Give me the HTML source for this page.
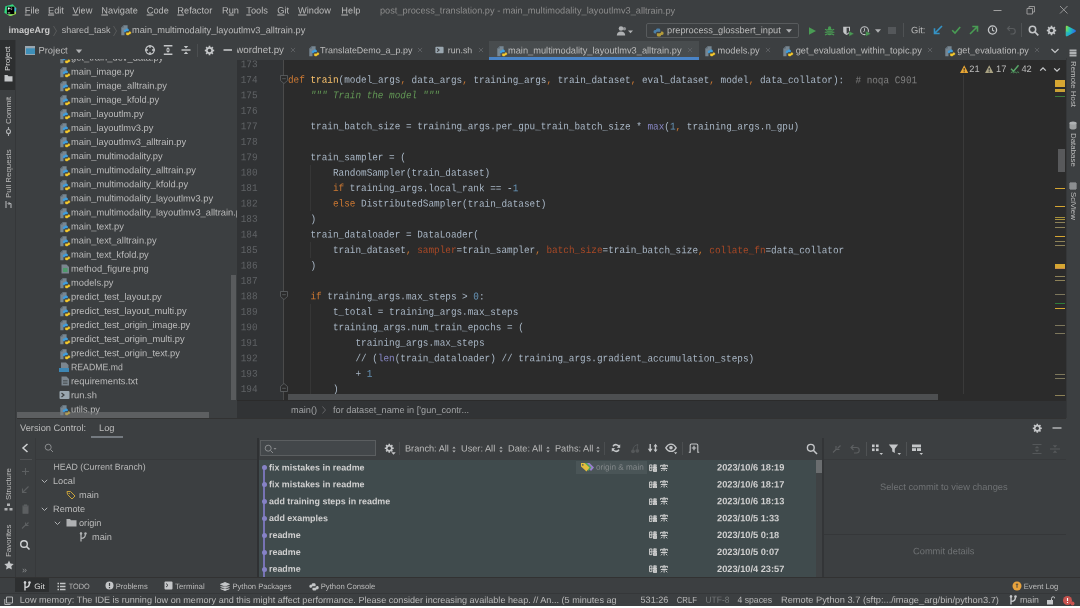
<!DOCTYPE html><html><head><meta charset="utf-8"><title>PyCharm</title><style>
html,body{margin:0;padding:0;background:#3c3f41;overflow:hidden}
body{width:1080px;height:608px;position:relative;font-family:"Liberation Sans",sans-serif}
.b{position:absolute;display:block}
.t{position:absolute;left:0;top:0;white-space:pre;display:block;height:16px;line-height:16px;transform-origin:0 0}
.c{position:absolute;white-space:pre;display:block;font-family:"Liberation Mono",monospace;font-size:9.378px;height:16px;line-height:16px;color:#a9b7c6;left:288.300px;transform:scaleY(1.1);transform-origin:0 11.500px}
.c i{font-style:italic;color:#629755}
.k{color:#cc7832}.f{color:#ffc66d}.n{color:#6897bb}.bi{color:#8888c6}.kw{color:#aa4926}.cm{color:#808080}
.ln{position:absolute;font-family:"Liberation Mono",monospace;font-size:9.35px;color:#606366;left:237px;width:20.500px;transform:scaleY(1.1);transform-origin:0 11.500px;text-align:right;height:16px;line-height:16px}
.v{position:absolute;white-space:pre;font-size:8.600px;color:#bbbbbb;height:12px;line-height:12px;transform-origin:0 0}
u{text-decoration:underline;text-underline-offset:1px;text-decoration-thickness:.7px}

</style></head><body><div class="b" style="left:0;top:0;width:1080px;height:608px;overflow:hidden;will-change:transform">
<div class="b" style="left:0px;top:0px;width:1080px;height:606px;background:#3c3f41;"></div>
<div class="b" style="left:237px;top:59.6px;width:829px;height:340.4px;background:#2b2b2b;"></div>
<div class="b" style="left:237px;top:59.6px;width:47px;height:340.4px;background:#313335;"></div>
<div class="b" style="left:283px;top:59.6px;width:1px;height:340.4px;background:#4b4b4b;"></div>
<div class="b" style="left:963.3px;top:75px;width:1px;height:319px;background:#3a3a3a;"></div>
<div class="b" style="left:237px;top:400px;width:829px;height:18px;background:#313335;"></div>
<div class="b" style="left:237px;top:400px;width:829px;height:1px;background:#2b2b2b;"></div>
<div class="b" style="left:0px;top:606px;width:1080px;height:2px;background:#ffffff;"></div>
<svg class="b" style="left:4.3px;top:3.6px;" width="12.4" height="12.4" viewBox="0 0 12 12"><defs><linearGradient id="pcg" x1="0" y1="0" x2="1" y2="1"><stop offset="0" stop-color="#22d88c"/><stop offset=".5" stop-color="#3fd67a"/><stop offset="1" stop-color="#dcec38"/></linearGradient></defs><path d="M1.300 2.200L8.500.300l3.300 3.500-.3 5.900L6 12 .3 8.500z" fill="url(#pcg)"/><path d="M9.800 3.300l2 .5-.15 3.500H9.800z" fill="#3bb4e6"/><rect x="2.800" y="2.600" width="7.200" height="7.200" fill="#000"/><rect x="3.600" y="8.300" width="2.400" height=".7" fill="#fff"/><path d="M3.700 3.500h1.100c.6 0 .9.300.9.800s-.3.800-.9.800h-.5v.9h-.6z" fill="#fff"/><path d="M7.900 4.100c-.2-.2-.4-.3-.7-.3-.4 0-.7.300-.7.800s.3.800.7.800c.3 0 .5-.1.700-.3" stroke="#fff" stroke-width=".55" fill="none"/></svg>
<span class="t" style="transform:translate(24.80px,2.50px) rotate(0.03deg);font-size:9.25px;color:#bbbbbb;"><u>F</u>ile</span>
<span class="t" style="transform:translate(48.00px,2.50px) rotate(0.03deg);font-size:9.25px;color:#bbbbbb;"><u>E</u>dit</span>
<span class="t" style="transform:translate(72.50px,2.50px) rotate(0.03deg);font-size:9.25px;color:#bbbbbb;"><u>V</u>iew</span>
<span class="t" style="transform:translate(101.30px,2.50px) rotate(0.03deg);font-size:9.25px;color:#bbbbbb;"><u>N</u>avigate</span>
<span class="t" style="transform:translate(146.70px,2.50px) rotate(0.03deg);font-size:9.25px;color:#bbbbbb;"><u>C</u>ode</span>
<span class="t" style="transform:translate(177.30px,2.50px) rotate(0.03deg);font-size:9.25px;color:#bbbbbb;"><u>R</u>efactor</span>
<span class="t" style="transform:translate(222.00px,2.50px) rotate(0.03deg);font-size:9.25px;color:#bbbbbb;">R<u>u</u>n</span>
<span class="t" style="transform:translate(246.30px,2.50px) rotate(0.03deg);font-size:9.25px;color:#bbbbbb;"><u>T</u>ools</span>
<span class="t" style="transform:translate(277.30px,2.50px) rotate(0.03deg);font-size:9.25px;color:#bbbbbb;"><u>G</u>it</span>
<span class="t" style="transform:translate(298.00px,2.50px) rotate(0.03deg);font-size:9.25px;color:#bbbbbb;"><u>W</u>indow</span>
<span class="t" style="transform:translate(341.30px,2.50px) rotate(0.03deg);font-size:9.25px;color:#bbbbbb;"><u>H</u>elp</span>
<span class="t" style="transform:translate(380.00px,2.49px) rotate(0.03deg);font-size:9.214px;color:#8c8c8c;">post_process_translation.py - main_multimodality_layoutlmv3_alltrain.py</span>
<svg class="b" style="left:992px;top:4px;" width="12" height="12" viewBox="0 0 12 12"><path d="M1.500 6.500h8" stroke="#a0a0a0" stroke-width="1"/></svg>
<svg class="b" style="left:1025px;top:4px;" width="12" height="12" viewBox="0 0 12 12"><path d="M2 4.500h5.500v5.500H2zM4 4.500V2.500h5.500V8H7.500" stroke="#a0a0a0" stroke-width=".9" fill="none"/></svg>
<svg class="b" style="left:1058px;top:4px;" width="12" height="12" viewBox="0 0 12 12"><path d="M2 2l7.500 7.500M9.500 2L2 9.500" stroke="#a0a0a0" stroke-width=".9" fill="none"/></svg>
<span class="t" style="transform:translate(8.50px,22.04px) rotate(0.03deg);font-size:9.0px;color:#c8c8c8;font-weight:bold;">imageArg</span>
<svg class="b" style="left:52px;top:24.5px;" width="6" height="12" viewBox="0 0 6 12"><path d="M1.500 1l3 5-3 5" stroke="#5e6060" stroke-width=".8" fill="none"/></svg>
<span class="t" style="transform:translate(61.70px,22.02px) rotate(0.03deg);font-size:8.95px;color:#bbbbbb;">shared_task</span>
<svg class="b" style="left:111.5px;top:24.5px;" width="6" height="12" viewBox="0 0 6 12"><path d="M1.500 1l3 5-3 5" stroke="#5e6060" stroke-width=".8" fill="none"/></svg>
<svg class="b" style="left:120.5px;top:25px;" width="11" height="11" viewBox="0 0 11 11"><path d="M2.600.300H6.600V6H3.500v4.200H.300V2.600z" fill="#8193a0" opacity=".85"/><path d="M.300 2.600L2.600.300v2.300z" fill="#56636d"/><g transform="translate(1.900 1.300) scale(.82)"><path d="M3.400 4.300c0-.9.600-1.300 1.800-1.300s1.800.400 1.800 1.300v1.400H4.700c-.9 0-1.300.500-1.300 1.400H2.600c-.9 0-1.300-.600-1.300-1.400s.400-1.400 1.300-1.400z" fill="#3f9fe0" stroke="#3f9fe0" stroke-width=".5"/><path d="M7.700 9.400c0 .9-.600 1.300-1.800 1.300S4.100 10.300 4.100 9.400V8h2.300c.9 0 1.300-.500 1.300-1.400h.8c.9 0 1.300.600 1.300 1.400s-.400 1.400-1.300 1.400z" fill="#f5c92c" stroke="#f5c92c" stroke-width=".5"/></g></svg>
<span class="t" style="transform:translate(132.00px,22.10px) rotate(0.03deg);font-size:9.263px;color:#bbbbbb;">main_multimodality_layoutlmv3_alltrain.py</span>
<svg class="b" style="left:616px;top:24.5px;" width="18" height="12" viewBox="0 0 18 12"><circle cx="5" cy="3.500" r="2.300" fill="#afb1b3"/><path d="M.8 10.500c0-2.700 1.800-4 4.200-4s4.200 1.300 4.200 4z" fill="#afb1b3"/><circle cx="8.300" cy="3.800" r="1.800" fill="#afb1b3" opacity=".7"/><path d="M12 5.500h5l-2.500 2.800z" fill="#afb1b3"/></svg>
<div class="b" style="left:646.3px;top:23px;width:152.5px;height:14.6px;background:transparent;border:1px solid #585b5d;box-sizing:border-box;border-radius:2px"></div>
<svg class="b" style="left:652px;top:24.5px;" width="13" height="13" viewBox="0 0 11 11"><path d="M3.400 4.300c0-.9.600-1.300 1.800-1.300s1.800.400 1.800 1.300v1.400H4.700c-.9 0-1.300.500-1.300 1.400H2.600c-.9 0-1.300-.600-1.300-1.400s.400-1.400 1.300-1.400z" fill="#4b7fa8"/><path d="M7.700 8.400c0 .9-.600 1.300-1.800 1.300S4.100 9.300 4.100 8.400V7h2.300c.9 0 1.300-.500 1.300-1.400h.800c.9 0 1.300.600 1.300 1.400s-.400 1.400-1.300 1.400z" fill="#b39b3b"/></svg>
<span class="t" style="transform:translate(667.00px,22.31px) rotate(0.03deg);font-size:9.279px;color:#bbbbbb;">preprocess_glossbert_input</span>
<svg class="b" style="left:785px;top:27.5px;" width="8" height="6" viewBox="0 0 8 6"><path d="M1 1.200h6L4 4.800z" fill="#afb1b3"/></svg>
<svg class="b" style="left:806px;top:24.5px;" width="12" height="12" viewBox="0 0 12 12"><path d="M3 2.200l7 3.800-7 3.800z" fill="#499c54"/></svg>
<svg class="b" style="left:823px;top:24.5px;" width="13" height="12" viewBox="0 0 13 12"><ellipse cx="6.600" cy="6.800" rx="2.900" ry="3.500" fill="#499c54"/><circle cx="6.600" cy="2.900" r="1.600" fill="#499c54"/><path d="M2 4.300l2.200 1M11.200 4.300L9 5.300M1.800 7.200h2.500M11.400 7.200H9M2 10l2.200-1M11.200 10L9 9" stroke="#499c54" stroke-width="1.100"/><path d="M4 5.800h5.200M4 8h5.200" stroke="#3c3f41" stroke-width=".7"/></svg>
<svg class="b" style="left:842px;top:24.5px;" width="14" height="12" viewBox="0 0 14 12"><path d="M1.200 1.800h6.800v4.500c0 1.800-1.500 3-3.400 3.700-1.900-.7-3.400-1.900-3.400-3.700z" fill="#c4c6c8"/><path d="M4.600 2.800h2.400v3.400c0 1-.8 1.800-2.400 2.500z" fill="#3c3f41"/><path d="M7 6l5.200 2.700L7 11.400z" fill="#499c54" stroke="#3c3f41" stroke-width=".5"/></svg>
<svg class="b" style="left:859px;top:24.5px;" width="14" height="12" viewBox="0 0 14 12"><circle cx="5.500" cy="5.700" r="3.900" stroke="#c4c6c8" stroke-width="1.100" fill="none"/><path d="M5.500 3.300v2.600l-1.200 1.200" stroke="#c4c6c8" stroke-width=".9" fill="none"/><path d="M6.700 6l5.200 2.700-5.200 2.700z" fill="#499c54" stroke="#3c3f41" stroke-width=".5"/></svg>
<svg class="b" style="left:874px;top:27.5px;" width="8" height="6" viewBox="0 0 8 6"><path d="M1 1.200h6L4 4.800z" fill="#afb1b3"/></svg>
<div class="b" style="left:888.4px;top:27px;width:7.4px;height:7.2px;background:#54575a;"></div>
<div class="b" style="left:903px;top:23px;width:1px;height:14px;background:#4f5254;"></div>
<span class="t" style="transform:translate(911.00px,22.21px) rotate(0.03deg);font-size:9.3px;color:#bbbbbb;">Git:</span>
<svg class="b" style="left:931.7px;top:23.8px;" width="12" height="12" viewBox="0 0 12 12"><path d="M10 2L2.500 9.500M2.500 4.300v5.200h5.200" stroke="#3592c4" stroke-width="1.600" fill="none"/></svg>
<svg class="b" style="left:950px;top:24px;" width="13" height="12" viewBox="0 0 13 12"><path d="M2.200 6.200l2.800 2.800 5.200-6" stroke="#499c54" stroke-width="1.600" fill="none"/></svg>
<svg class="b" style="left:968px;top:24px;" width="12" height="12" viewBox="0 0 12 12"><path d="M2 10L9.500 2.500M4.300 2.500h5.200v5.200" stroke="#499c54" stroke-width="1.600" fill="none"/></svg>
<svg class="b" style="left:985.7px;top:24.4px;" width="13" height="12" viewBox="0 0 13 12"><circle cx="6.500" cy="6" r="4.100" stroke="#c4c6c8" stroke-width="1.300" fill="none"/><path d="M6.500 3.600v2.700l1.800 1" stroke="#c4c6c8" stroke-width="1.100" fill="none"/></svg>
<svg class="b" style="left:1004.5px;top:23.8px;" width="12" height="12" viewBox="0 0 12 12"><path d="M2.500 4.500h5a2.700 2.700 0 010 5.500H5.500M4.800 2.200L2.500 4.500 4.800 6.800" stroke="#595c5e" stroke-width="1.200" fill="none"/></svg>
<div class="b" style="left:1021px;top:23px;width:1px;height:14px;background:#4f5254;"></div>
<svg class="b" style="left:1028px;top:24.5px;" width="12" height="12" viewBox="0 0 12 12"><circle cx="4.500" cy="4.500" r="3.200" stroke="#c4c6c8" stroke-width="1.500" fill="none"/><path d="M7 7L10.300 10.300" stroke="#c4c6c8" stroke-width="1.700"/></svg>
<svg class="b" style="left:1045.5px;top:25px;" width="11" height="11" viewBox="0 0 12 12"><path d="M9.78 5.04L11.12 5.11L11.12 6.89L9.78 6.96L9.35 8.00L10.25 8.99L8.99 10.25L8.00 9.35L6.96 9.78L6.89 11.12L5.11 11.12L5.04 9.78L4.00 9.35L3.01 10.25L1.75 8.99L2.65 8.00L2.22 6.96L0.88 6.89L0.88 5.11L2.22 5.04L2.65 4.00L1.75 3.01L3.01 1.75L4.00 2.65L5.04 2.22L5.11 0.88L6.89 0.88L6.96 2.22L8.00 2.65L8.99 1.75L10.25 3.01L9.35 4.00z" fill="#c4c6c8"/><circle cx="6" cy="6" r="1.900" fill="#3c3f41"/></svg>
<svg class="b" style="left:1064.5px;top:24.5px;" width="12" height="12" viewBox="0 0 12 12"><defs><linearGradient id="tbg" x1="0" y1="0" x2="1" y2=".3"><stop offset="0" stop-color="#9be03c"/><stop offset=".45" stop-color="#1fc8b8"/><stop offset="1" stop-color="#2a6fe8"/></linearGradient></defs><path d="M.8 1.800C.8.900 1.700.500 2.500 1L10.300 5.100c.8.400.8 1.400 0 1.800L2.500 11c-.8.500-1.700.100-1.700-.8z" fill="url(#tbg)"/><path d="M.8 6v4.200c0 .9.900 1.300 1.700.8L6 9z" fill="#1e9fd8" opacity=".6"/></svg>
<svg class="b" style="left:24.8px;top:46.1px;" width="10.6" height="9" viewBox="0 0 10.6 9"><rect x=".5" y=".5" width="10" height="8" fill="#3e8fb8" stroke="#9aa7b0" stroke-width="1"/><rect x=".5" y=".5" width="10" height="1.800" fill="#9aa7b0"/></svg>
<span class="t" style="transform:translate(38.50px,42.54px) rotate(0.03deg);font-size:9.4px;color:#bbbbbb;">Project</span>
<svg class="b" style="left:75.2px;top:48.7px;" width="8" height="5" viewBox="0 0 8 5"><path d="M.8.600h6.400L4 4.200z" fill="#afb1b3"/></svg>
<svg class="b" style="left:143.9px;top:44px;" width="12" height="12" viewBox="0 0 12 12"><circle cx="6" cy="6" r="4.200" stroke="#c4c6c8" stroke-width="1.300" fill="none"/><path d="M6 1v3M6 8v3M1 6H4M8 6h3" stroke="#c4c6c8" stroke-width="1.300"/></svg>
<svg class="b" style="left:162px;top:44px;" width="12" height="12" viewBox="0 0 12 12"><path d="M1.800 1.800h8.600M1.800 10.200h8.600" stroke="#c4c6c8" stroke-width="1.400"/><path d="M6 3.200l2.200 2.300H3.800zM6 8.800L3.800 6.500h4.400z" fill="#c4c6c8"/></svg>
<svg class="b" style="left:180.4px;top:44.2px;" width="12" height="12" viewBox="0 0 12 12"><path d="M1.500 6h9" stroke="#c4c6c8" stroke-width="1.400"/><path d="M6 4.500L3.800 2h4.400zM6 7.500l2.200 2.500H3.800z" fill="#c4c6c8"/></svg>
<div class="b" style="left:197px;top:43.5px;width:1px;height:13px;background:#4b4e50;"></div>
<svg class="b" style="left:204.3px;top:44.8px;" width="11" height="11" viewBox="0 0 12 12"><path d="M9.78 5.04L11.12 5.11L11.12 6.89L9.78 6.96L9.35 8.00L10.25 8.99L8.99 10.25L8.00 9.35L6.96 9.78L6.89 11.12L5.11 11.12L5.04 9.78L4.00 9.35L3.01 10.25L1.75 8.99L2.65 8.00L2.22 6.96L0.88 6.89L0.88 5.11L2.22 5.04L2.65 4.00L1.75 3.01L3.01 1.75L4.00 2.65L5.04 2.22L5.11 0.88L6.89 0.88L6.96 2.22L8.00 2.65L8.99 1.75L10.25 3.01L9.35 4.00z" fill="#c4c6c8"/><circle cx="6" cy="6" r="1.900" fill="#3c3f41"/></svg>
<svg class="b" style="left:222px;top:44px;" width="12" height="12" viewBox="0 0 12 12"><path d="M1.500 6h8.500" stroke="#c4c6c8" stroke-width="1.600"/></svg>
<div class="b" style="left:237px;top:40px;width:829px;height:19.6px;background:#3c3f41;"></div>
<div class="b" style="left:488.5px;top:41px;width:210px;height:18.6px;background:#484c4e;"></div>
<div class="b" style="left:488.5px;top:56.8px;width:210px;height:2.8px;background:#4a84c7;"></div>
<div class="b" style="left:237px;top:40px;width:829px;height:19.600px;overflow:hidden">
<span class="t" style="transform:translate(-0.80px,2.04px) rotate(0.03deg);font-size:9.772px;color:#bbbbbb;">wordnet.py</span>
<svg class="b" style="left:52.5px;top:7.300000000000001px;" width="6" height="6" viewBox="0 0 6 6"><path d="M.9.9l4.200 4.200M5.100.9L.9 5.100" stroke="#5f6265" stroke-width="0.9" fill="none"/></svg>
<svg class="b" style="left:71.5px;top:5.5px;" width="11" height="11" viewBox="0 0 11 11"><path d="M2.600.300H6.600V6H3.500v4.200H.300V2.600z" fill="#8193a0" opacity=".85"/><path d="M.300 2.600L2.600.300v2.300z" fill="#56636d"/><g transform="translate(1.900 1.300) scale(.82)"><path d="M3.400 4.300c0-.9.600-1.300 1.800-1.300s1.800.400 1.800 1.300v1.400H4.700c-.9 0-1.300.500-1.300 1.400H2.600c-.9 0-1.300-.600-1.300-1.400s.400-1.400 1.300-1.400z" fill="#3f9fe0" stroke="#3f9fe0" stroke-width=".5"/><path d="M7.700 9.400c0 .9-.600 1.300-1.800 1.300S4.100 10.300 4.100 9.400V8h2.300c.9 0 1.300-.500 1.300-1.400h.8c.9 0 1.300.600 1.300 1.400s-.400 1.400-1.300 1.400z" fill="#f5c92c" stroke="#f5c92c" stroke-width=".5"/></g></svg>
<span class="t" style="transform:translate(83.00px,2.32px) rotate(0.03deg);font-size:8.931px;color:#bbbbbb;">TranslateDemo_a_p.py</span>
<svg class="b" style="left:180px;top:7.300000000000001px;" width="6" height="6" viewBox="0 0 6 6"><path d="M.9.9l4.200 4.200M5.100.9L.9 5.100" stroke="#5f6265" stroke-width="0.9" fill="none"/></svg>
<svg class="b" style="left:198px;top:5.8px;" width="9" height="8.2" viewBox="0 0 11 10"><rect x=".5" y="1" width="10" height="8" rx="1" fill="#9aa7b0"/><path d="M2.500 3l2.500 2-2.500 2" stroke="#3c3f41" stroke-width="1.300" fill="none"/></svg>
<span class="t" style="transform:translate(210.80px,2.29px) rotate(0.03deg);font-size:8.815px;color:#bbbbbb;">run.sh</span>
<svg class="b" style="left:241px;top:7.300000000000001px;" width="6" height="6" viewBox="0 0 6 6"><path d="M.9.9l4.200 4.200M5.100.9L.9 5.100" stroke="#5f6265" stroke-width="0.9" fill="none"/></svg>
<svg class="b" style="left:259.5px;top:5.5px;" width="11" height="11" viewBox="0 0 11 11"><path d="M2.600.300H6.600V6H3.500v4.200H.300V2.600z" fill="#8193a0" opacity=".85"/><path d="M.300 2.600L2.600.300v2.300z" fill="#56636d"/><g transform="translate(1.900 1.300) scale(.82)"><path d="M3.400 4.300c0-.9.600-1.300 1.800-1.300s1.800.400 1.800 1.300v1.400H4.700c-.9 0-1.300.500-1.300 1.400H2.600c-.9 0-1.300-.600-1.300-1.400s.400-1.400 1.300-1.400z" fill="#3f9fe0" stroke="#3f9fe0" stroke-width=".5"/><path d="M7.700 9.400c0 .9-.600 1.300-1.800 1.300S4.100 10.300 4.100 9.400V8h2.300c.9 0 1.300-.500 1.300-1.400h.8c.9 0 1.300.600 1.300 1.400s-.400 1.400-1.300 1.400z" fill="#f5c92c" stroke="#f5c92c" stroke-width=".5"/></g></svg>
<span class="t" style="transform:translate(271.00px,2.41px) rotate(0.03deg);font-size:9.289px;color:#bbbbbb;">main_multimodality_layoutlmv3_alltrain.py</span>
<svg class="b" style="left:450px;top:7.300000000000001px;" width="6" height="6" viewBox="0 0 6 6"><path d="M.9.9l4.200 4.200M5.100.9L.9 5.100" stroke="#5f6265" stroke-width="0.9" fill="none"/></svg>
<svg class="b" style="left:468px;top:5.5px;" width="11" height="11" viewBox="0 0 11 11"><path d="M2.600.300H6.600V6H3.500v4.200H.300V2.600z" fill="#8193a0" opacity=".85"/><path d="M.300 2.600L2.600.300v2.300z" fill="#56636d"/><g transform="translate(1.900 1.300) scale(.82)"><path d="M3.400 4.300c0-.9.600-1.300 1.800-1.300s1.800.400 1.800 1.300v1.400H4.700c-.9 0-1.300.500-1.300 1.400H2.600c-.9 0-1.300-.600-1.300-1.400s.400-1.400 1.300-1.400z" fill="#3f9fe0" stroke="#3f9fe0" stroke-width=".5"/><path d="M7.700 9.400c0 .9-.600 1.300-1.800 1.300S4.100 10.300 4.100 9.400V8h2.300c.9 0 1.300-.500 1.300-1.400h.8c.9 0 1.300.600 1.300 1.400s-.400 1.400-1.300 1.400z" fill="#f5c92c" stroke="#f5c92c" stroke-width=".5"/></g></svg>
<span class="t" style="transform:translate(480.50px,2.41px) rotate(0.03deg);font-size:9.281px;color:#bbbbbb;">models.py</span>
<svg class="b" style="left:528px;top:7.300000000000001px;" width="6" height="6" viewBox="0 0 6 6"><path d="M.9.9l4.200 4.200M5.100.9L.9 5.100" stroke="#5f6265" stroke-width="0.9" fill="none"/></svg>
<svg class="b" style="left:546px;top:5.5px;" width="11" height="11" viewBox="0 0 11 11"><path d="M2.600.300H6.600V6H3.500v4.200H.300V2.600z" fill="#8193a0" opacity=".85"/><path d="M.300 2.600L2.600.300v2.300z" fill="#56636d"/><g transform="translate(1.900 1.300) scale(.82)"><path d="M3.400 4.300c0-.9.600-1.300 1.800-1.300s1.800.400 1.800 1.300v1.400H4.700c-.9 0-1.300.500-1.300 1.400H2.600c-.9 0-1.300-.600-1.300-1.400s.400-1.400 1.300-1.400z" fill="#3f9fe0" stroke="#3f9fe0" stroke-width=".5"/><path d="M7.700 9.400c0 .9-.600 1.300-1.800 1.300S4.100 10.300 4.100 9.400V8h2.300c.9 0 1.300-.500 1.300-1.400h.8c.9 0 1.300.600 1.300 1.400s-.400 1.400-1.300 1.400z" fill="#f5c92c" stroke="#f5c92c" stroke-width=".5"/></g></svg>
<span class="t" style="transform:translate(558.70px,2.41px) rotate(0.03deg);font-size:9.272px;color:#bbbbbb;">get_evaluation_within_topic.py</span>
<svg class="b" style="left:690px;top:7.300000000000001px;" width="6" height="6" viewBox="0 0 6 6"><path d="M.9.9l4.200 4.200M5.100.9L.9 5.100" stroke="#5f6265" stroke-width="0.9" fill="none"/></svg>
<svg class="b" style="left:708px;top:5.5px;" width="11" height="11" viewBox="0 0 11 11"><path d="M2.600.300H6.600V6H3.500v4.200H.300V2.600z" fill="#8193a0" opacity=".85"/><path d="M.300 2.600L2.600.300v2.300z" fill="#56636d"/><g transform="translate(1.900 1.300) scale(.82)"><path d="M3.400 4.300c0-.9.600-1.300 1.800-1.300s1.800.400 1.800 1.300v1.400H4.700c-.9 0-1.300.500-1.300 1.400H2.600c-.9 0-1.300-.600-1.300-1.400s.400-1.400 1.300-1.400z" fill="#3f9fe0" stroke="#3f9fe0" stroke-width=".5"/><path d="M7.700 9.400c0 .9-.600 1.300-1.800 1.300S4.100 10.300 4.100 9.400V8h2.300c.9 0 1.300-.500 1.300-1.400h.8c.9 0 1.300.600 1.300 1.400s-.400 1.400-1.300 1.400z" fill="#f5c92c" stroke="#f5c92c" stroke-width=".5"/></g></svg>
<span class="t" style="transform:translate(720.30px,2.37px) rotate(0.03deg);font-size:9.146px;color:#bbbbbb;">get_evaluation.py</span>
<svg class="b" style="left:797px;top:7.300000000000001px;" width="6" height="6" viewBox="0 0 6 6"><path d="M.9.9l4.200 4.200M5.100.9L.9 5.100" stroke="#5f6265" stroke-width="0.9" fill="none"/></svg>
<svg class="b" style="left:813px;top:7px;" width="10" height="8" viewBox="0 0 10 8"><path d="M1.500 2l3.500 3.500L8.500 2" stroke="#c4c6c8" stroke-width="1.200" fill="none"/></svg>
</div>
<div class="b" style="left:0px;top:40px;width:15px;height:537px;background:#3c3f41;"></div>
<div class="b" style="left:15px;top:40px;width:1px;height:537px;background:#353739;"></div>
<div class="b" style="left:0px;top:40px;width:15px;height:49.5px;background:#2d2f30;"></div>
<span class="v" style="left:2px;top:70.5px;transform:rotate(-90deg);font-size:7.9px;color:#dcdcdc;">Project</span>
<svg class="b" style="left:4px;top:73.5px;" width="9" height="8" viewBox="0 0 9 8"><path d="M.5 1h3l1 1.200h4V7.500h-8z" fill="#c4c6c8"/></svg>
<span class="v" style="left:2.5px;top:124px;transform:rotate(-90deg);font-size:7.9px;color:#bbbbbb;">Commit</span>
<svg class="b" style="left:4px;top:126.5px;" width="9" height="9" viewBox="0 0 9 9"><circle cx="4.500" cy="4.500" r="2" stroke="#afb1b3" stroke-width="1.100" fill="none"/><path d="M4.500 0v2.500M4.500 6.500V9" stroke="#afb1b3" stroke-width="1.100"/></svg>
<span class="v" style="left:2.5px;top:198px;transform:rotate(-90deg);font-size:7.9px;color:#bbbbbb;">Pull Requests</span>
<svg class="b" style="left:4px;top:200px;" width="9" height="9" viewBox="0 0 9 9"><path d="M2 1v7M7 3.500V8M4.500 3.500H7" stroke="#afb1b3" stroke-width="1.100" fill="none"/><path d="M5.500 2L4 3.500 5.500 5" stroke="#afb1b3" stroke-width="1" fill="none"/></svg>
<span class="v" style="left:2.5px;top:499.5px;transform:rotate(-90deg);font-size:7.9px;color:#bbbbbb;">Structure</span>
<svg class="b" style="left:4px;top:503px;" width="9" height="8" viewBox="0 0 9 8"><rect x="3" y=".5" width="3" height="2.500" fill="#afb1b3"/><rect x=".5" y="5" width="3" height="2.500" fill="#afb1b3"/><rect x="5.500" y="5" width="3" height="2.500" fill="#afb1b3"/></svg>
<span class="v" style="left:2.5px;top:556.5px;transform:rotate(-90deg);font-size:7.9px;color:#bbbbbb;">Favorites</span>
<svg class="b" style="left:3.5px;top:559.5px;" width="10" height="10" viewBox="0 0 10 10"><path d="M5 .5l1.400 3 3.300.4-2.400 2.300.6 3.300L5 7.900 2.100 9.500l.6-3.300L.3 3.900l3.300-.4z" fill="#c4c6c8"/></svg>
<div class="b" style="left:17px;top:59px;width:220px;height:359px;overflow:hidden">
<svg class="b" style="left:43.2px;top:-6.0200000000000005px;" width="11" height="11" viewBox="0 0 11 11"><path d="M2.600.300H6.600V6H3.500v4.200H.300V2.600z" fill="#8193a0" opacity=".85"/><path d="M.300 2.600L2.600.300v2.300z" fill="#56636d"/><g transform="translate(1.900 1.300) scale(.82)"><path d="M3.400 4.300c0-.9.600-1.300 1.800-1.300s1.800.400 1.800 1.300v1.400H4.700c-.9 0-1.300.500-1.300 1.400H2.600c-.9 0-1.300-.600-1.300-1.400s.400-1.400 1.300-1.400z" fill="#3f9fe0" stroke="#3f9fe0" stroke-width=".5"/><path d="M7.700 9.400c0 .9-.600 1.300-1.800 1.300S4.100 10.300 4.100 9.400V8h2.300c.9 0 1.300-.500 1.300-1.400h.8c.9 0 1.300.600 1.300 1.400s-.400 1.400-1.300 1.400z" fill="#f5c92c" stroke="#f5c92c" stroke-width=".5"/></g></svg>
<span class="t" style="transform:translate(54.00px,-9.40px) rotate(0.03deg);font-size:9.33px;color:#bbbbbb;">get_train_dev_data.py</span>
<svg class="b" style="left:43.2px;top:8.053px;" width="11" height="11" viewBox="0 0 11 11"><path d="M2.600.300H6.600V6H3.500v4.200H.300V2.600z" fill="#8193a0" opacity=".85"/><path d="M.300 2.600L2.600.300v2.300z" fill="#56636d"/><g transform="translate(1.900 1.300) scale(.82)"><path d="M3.400 4.300c0-.9.600-1.300 1.800-1.300s1.800.400 1.800 1.300v1.400H4.700c-.9 0-1.300.500-1.300 1.400H2.600c-.9 0-1.300-.600-1.300-1.400s.400-1.400 1.300-1.400z" fill="#3f9fe0" stroke="#3f9fe0" stroke-width=".5"/><path d="M7.700 9.400c0 .9-.600 1.300-1.800 1.300S4.100 10.300 4.100 9.400V8h2.300c.9 0 1.300-.500 1.300-1.400h.8c.9 0 1.300.600 1.300 1.400s-.400 1.400-1.300 1.400z" fill="#f5c92c" stroke="#f5c92c" stroke-width=".5"/></g></svg>
<span class="t" style="transform:translate(54.00px,4.67px) rotate(0.03deg);font-size:9.33px;color:#bbbbbb;">main_image.py</span>
<svg class="b" style="left:43.2px;top:22.125999999999994px;" width="11" height="11" viewBox="0 0 11 11"><path d="M2.600.300H6.600V6H3.500v4.200H.300V2.600z" fill="#8193a0" opacity=".85"/><path d="M.300 2.600L2.600.300v2.300z" fill="#56636d"/><g transform="translate(1.900 1.300) scale(.82)"><path d="M3.400 4.300c0-.9.600-1.300 1.800-1.300s1.800.400 1.800 1.300v1.400H4.700c-.9 0-1.300.500-1.300 1.400H2.600c-.9 0-1.300-.600-1.300-1.400s.400-1.400 1.300-1.400z" fill="#3f9fe0" stroke="#3f9fe0" stroke-width=".5"/><path d="M7.700 9.400c0 .9-.600 1.300-1.800 1.300S4.100 10.300 4.100 9.400V8h2.300c.9 0 1.300-.500 1.300-1.400h.8c.9 0 1.300.600 1.300 1.400s-.400 1.400-1.300 1.400z" fill="#f5c92c" stroke="#f5c92c" stroke-width=".5"/></g></svg>
<span class="t" style="transform:translate(54.00px,18.75px) rotate(0.03deg);font-size:9.33px;color:#bbbbbb;">main_image_alltrain.py</span>
<svg class="b" style="left:43.2px;top:36.199px;" width="11" height="11" viewBox="0 0 11 11"><path d="M2.600.300H6.600V6H3.500v4.200H.300V2.600z" fill="#8193a0" opacity=".85"/><path d="M.300 2.600L2.600.300v2.300z" fill="#56636d"/><g transform="translate(1.900 1.300) scale(.82)"><path d="M3.400 4.300c0-.9.600-1.300 1.800-1.300s1.800.400 1.800 1.300v1.400H4.700c-.9 0-1.300.500-1.300 1.400H2.600c-.9 0-1.300-.600-1.300-1.400s.400-1.400 1.300-1.400z" fill="#3f9fe0" stroke="#3f9fe0" stroke-width=".5"/><path d="M7.700 9.400c0 .9-.600 1.300-1.800 1.300S4.100 10.300 4.100 9.400V8h2.300c.9 0 1.300-.500 1.300-1.400h.8c.9 0 1.300.600 1.300 1.400s-.400 1.400-1.300 1.400z" fill="#f5c92c" stroke="#f5c92c" stroke-width=".5"/></g></svg>
<span class="t" style="transform:translate(54.00px,32.82px) rotate(0.03deg);font-size:9.33px;color:#bbbbbb;">main_image_kfold.py</span>
<svg class="b" style="left:43.2px;top:50.272000000000006px;" width="11" height="11" viewBox="0 0 11 11"><path d="M2.600.300H6.600V6H3.500v4.200H.300V2.600z" fill="#8193a0" opacity=".85"/><path d="M.300 2.600L2.600.300v2.300z" fill="#56636d"/><g transform="translate(1.900 1.300) scale(.82)"><path d="M3.400 4.300c0-.9.600-1.300 1.800-1.300s1.800.400 1.800 1.300v1.400H4.700c-.9 0-1.300.500-1.300 1.400H2.600c-.9 0-1.300-.600-1.300-1.400s.400-1.400 1.300-1.400z" fill="#3f9fe0" stroke="#3f9fe0" stroke-width=".5"/><path d="M7.700 9.400c0 .9-.600 1.300-1.800 1.300S4.100 10.300 4.100 9.400V8h2.300c.9 0 1.300-.500 1.300-1.400h.8c.9 0 1.300.600 1.300 1.400s-.400 1.400-1.300 1.400z" fill="#f5c92c" stroke="#f5c92c" stroke-width=".5"/></g></svg>
<span class="t" style="transform:translate(54.00px,46.89px) rotate(0.03deg);font-size:9.33px;color:#bbbbbb;">main_layoutlm.py</span>
<svg class="b" style="left:43.2px;top:64.34500000000001px;" width="11" height="11" viewBox="0 0 11 11"><path d="M2.600.300H6.600V6H3.500v4.200H.300V2.600z" fill="#8193a0" opacity=".85"/><path d="M.300 2.600L2.600.300v2.300z" fill="#56636d"/><g transform="translate(1.900 1.300) scale(.82)"><path d="M3.400 4.300c0-.9.600-1.300 1.800-1.300s1.800.400 1.800 1.300v1.400H4.700c-.9 0-1.300.500-1.300 1.400H2.600c-.9 0-1.300-.600-1.300-1.400s.400-1.400 1.300-1.400z" fill="#3f9fe0" stroke="#3f9fe0" stroke-width=".5"/><path d="M7.700 9.400c0 .9-.600 1.300-1.800 1.300S4.100 10.300 4.100 9.400V8h2.300c.9 0 1.300-.500 1.300-1.400h.8c.9 0 1.300.600 1.300 1.400s-.400 1.400-1.300 1.400z" fill="#f5c92c" stroke="#f5c92c" stroke-width=".5"/></g></svg>
<span class="t" style="transform:translate(54.00px,60.97px) rotate(0.03deg);font-size:9.33px;color:#bbbbbb;">main_layoutlmv3.py</span>
<svg class="b" style="left:43.2px;top:78.41799999999999px;" width="11" height="11" viewBox="0 0 11 11"><path d="M2.600.300H6.600V6H3.500v4.200H.300V2.600z" fill="#8193a0" opacity=".85"/><path d="M.300 2.600L2.600.300v2.300z" fill="#56636d"/><g transform="translate(1.900 1.300) scale(.82)"><path d="M3.400 4.300c0-.9.600-1.300 1.800-1.300s1.800.400 1.800 1.300v1.400H4.700c-.9 0-1.300.500-1.300 1.400H2.600c-.9 0-1.300-.600-1.300-1.400s.400-1.400 1.300-1.400z" fill="#3f9fe0" stroke="#3f9fe0" stroke-width=".5"/><path d="M7.700 9.400c0 .9-.600 1.300-1.800 1.300S4.100 10.300 4.100 9.400V8h2.300c.9 0 1.300-.500 1.300-1.400h.8c.9 0 1.300.600 1.300 1.400s-.400 1.400-1.300 1.400z" fill="#f5c92c" stroke="#f5c92c" stroke-width=".5"/></g></svg>
<span class="t" style="transform:translate(54.00px,75.04px) rotate(0.03deg);font-size:9.33px;color:#bbbbbb;">main_layoutlmv3_alltrain.py</span>
<svg class="b" style="left:43.2px;top:92.491px;" width="11" height="11" viewBox="0 0 11 11"><path d="M2.600.300H6.600V6H3.500v4.200H.300V2.600z" fill="#8193a0" opacity=".85"/><path d="M.300 2.600L2.600.300v2.300z" fill="#56636d"/><g transform="translate(1.900 1.300) scale(.82)"><path d="M3.400 4.300c0-.9.600-1.300 1.800-1.300s1.800.400 1.800 1.300v1.400H4.700c-.9 0-1.300.500-1.300 1.400H2.600c-.9 0-1.300-.600-1.300-1.400s.400-1.400 1.300-1.400z" fill="#3f9fe0" stroke="#3f9fe0" stroke-width=".5"/><path d="M7.700 9.400c0 .9-.600 1.300-1.800 1.300S4.100 10.300 4.100 9.400V8h2.300c.9 0 1.300-.500 1.300-1.400h.8c.9 0 1.300.600 1.300 1.400s-.400 1.400-1.300 1.400z" fill="#f5c92c" stroke="#f5c92c" stroke-width=".5"/></g></svg>
<span class="t" style="transform:translate(54.00px,89.11px) rotate(0.03deg);font-size:9.33px;color:#bbbbbb;">main_multimodality.py</span>
<svg class="b" style="left:43.2px;top:106.56400000000001px;" width="11" height="11" viewBox="0 0 11 11"><path d="M2.600.300H6.600V6H3.500v4.200H.300V2.600z" fill="#8193a0" opacity=".85"/><path d="M.300 2.600L2.600.300v2.300z" fill="#56636d"/><g transform="translate(1.900 1.300) scale(.82)"><path d="M3.400 4.300c0-.9.600-1.300 1.800-1.300s1.800.400 1.800 1.300v1.400H4.700c-.9 0-1.300.500-1.300 1.400H2.600c-.9 0-1.300-.600-1.300-1.400s.400-1.400 1.300-1.400z" fill="#3f9fe0" stroke="#3f9fe0" stroke-width=".5"/><path d="M7.700 9.400c0 .9-.600 1.300-1.800 1.300S4.100 10.300 4.100 9.400V8h2.300c.9 0 1.300-.500 1.300-1.400h.8c.9 0 1.300.600 1.300 1.400s-.400 1.400-1.300 1.400z" fill="#f5c92c" stroke="#f5c92c" stroke-width=".5"/></g></svg>
<span class="t" style="transform:translate(54.00px,103.19px) rotate(0.03deg);font-size:9.33px;color:#bbbbbb;">main_multimodality_alltrain.py</span>
<svg class="b" style="left:43.2px;top:120.63700000000001px;" width="11" height="11" viewBox="0 0 11 11"><path d="M2.600.300H6.600V6H3.500v4.200H.300V2.600z" fill="#8193a0" opacity=".85"/><path d="M.300 2.600L2.600.300v2.300z" fill="#56636d"/><g transform="translate(1.900 1.300) scale(.82)"><path d="M3.400 4.300c0-.9.600-1.300 1.800-1.300s1.800.400 1.800 1.300v1.400H4.700c-.9 0-1.300.500-1.300 1.400H2.600c-.9 0-1.300-.600-1.300-1.400s.400-1.400 1.300-1.400z" fill="#3f9fe0" stroke="#3f9fe0" stroke-width=".5"/><path d="M7.700 9.400c0 .9-.600 1.300-1.800 1.300S4.100 10.300 4.100 9.400V8h2.300c.9 0 1.300-.500 1.300-1.400h.8c.9 0 1.300.600 1.300 1.400s-.400 1.400-1.300 1.400z" fill="#f5c92c" stroke="#f5c92c" stroke-width=".5"/></g></svg>
<span class="t" style="transform:translate(54.00px,117.26px) rotate(0.03deg);font-size:9.33px;color:#bbbbbb;">main_multimodality_kfold.py</span>
<svg class="b" style="left:43.2px;top:134.71000000000004px;" width="11" height="11" viewBox="0 0 11 11"><path d="M2.600.300H6.600V6H3.500v4.200H.300V2.600z" fill="#8193a0" opacity=".85"/><path d="M.300 2.600L2.600.300v2.300z" fill="#56636d"/><g transform="translate(1.900 1.300) scale(.82)"><path d="M3.400 4.300c0-.9.600-1.300 1.800-1.300s1.800.400 1.800 1.300v1.400H4.700c-.9 0-1.300.500-1.300 1.400H2.600c-.9 0-1.300-.600-1.300-1.400s.400-1.400 1.300-1.400z" fill="#3f9fe0" stroke="#3f9fe0" stroke-width=".5"/><path d="M7.700 9.400c0 .9-.600 1.300-1.800 1.300S4.100 10.300 4.100 9.400V8h2.300c.9 0 1.300-.500 1.300-1.400h.8c.9 0 1.300.600 1.300 1.400s-.400 1.400-1.300 1.400z" fill="#f5c92c" stroke="#f5c92c" stroke-width=".5"/></g></svg>
<span class="t" style="transform:translate(54.00px,131.33px) rotate(0.03deg);font-size:9.33px;color:#bbbbbb;">main_multimodality_layoutlmv3.py</span>
<svg class="b" style="left:43.2px;top:148.78300000000002px;" width="11" height="11" viewBox="0 0 11 11"><path d="M2.600.300H6.600V6H3.500v4.200H.300V2.600z" fill="#8193a0" opacity=".85"/><path d="M.300 2.600L2.600.300v2.300z" fill="#56636d"/><g transform="translate(1.900 1.300) scale(.82)"><path d="M3.400 4.300c0-.9.600-1.300 1.800-1.300s1.800.400 1.800 1.300v1.400H4.700c-.9 0-1.300.500-1.300 1.400H2.600c-.9 0-1.300-.600-1.300-1.400s.400-1.400 1.300-1.400z" fill="#3f9fe0" stroke="#3f9fe0" stroke-width=".5"/><path d="M7.700 9.400c0 .9-.600 1.300-1.800 1.300S4.100 10.300 4.100 9.400V8h2.300c.9 0 1.300-.500 1.300-1.400h.8c.9 0 1.300.600 1.300 1.400s-.400 1.400-1.300 1.400z" fill="#f5c92c" stroke="#f5c92c" stroke-width=".5"/></g></svg>
<span class="t" style="transform:translate(54.00px,145.40px) rotate(0.03deg);font-size:9.33px;color:#bbbbbb;">main_multimodality_layoutlmv3_alltrain.py</span>
<svg class="b" style="left:43.2px;top:162.85600000000002px;" width="11" height="11" viewBox="0 0 11 11"><path d="M2.600.300H6.600V6H3.500v4.200H.300V2.600z" fill="#8193a0" opacity=".85"/><path d="M.300 2.600L2.600.300v2.300z" fill="#56636d"/><g transform="translate(1.900 1.300) scale(.82)"><path d="M3.400 4.300c0-.9.600-1.300 1.800-1.300s1.800.400 1.800 1.300v1.400H4.700c-.9 0-1.300.500-1.300 1.400H2.600c-.9 0-1.300-.600-1.300-1.400s.400-1.400 1.300-1.400z" fill="#3f9fe0" stroke="#3f9fe0" stroke-width=".5"/><path d="M7.700 9.400c0 .9-.600 1.300-1.800 1.300S4.100 10.300 4.100 9.400V8h2.300c.9 0 1.300-.500 1.300-1.400h.8c.9 0 1.300.600 1.300 1.400s-.400 1.400-1.300 1.400z" fill="#f5c92c" stroke="#f5c92c" stroke-width=".5"/></g></svg>
<span class="t" style="transform:translate(54.00px,159.48px) rotate(0.03deg);font-size:9.33px;color:#bbbbbb;">main_text.py</span>
<svg class="b" style="left:43.2px;top:176.92900000000003px;" width="11" height="11" viewBox="0 0 11 11"><path d="M2.600.300H6.600V6H3.500v4.200H.300V2.600z" fill="#8193a0" opacity=".85"/><path d="M.300 2.600L2.600.300v2.300z" fill="#56636d"/><g transform="translate(1.900 1.300) scale(.82)"><path d="M3.400 4.300c0-.9.600-1.300 1.800-1.300s1.800.400 1.800 1.300v1.400H4.700c-.9 0-1.300.500-1.300 1.400H2.600c-.9 0-1.300-.600-1.300-1.400s.400-1.400 1.300-1.400z" fill="#3f9fe0" stroke="#3f9fe0" stroke-width=".5"/><path d="M7.700 9.400c0 .9-.600 1.300-1.800 1.300S4.100 10.300 4.100 9.400V8h2.300c.9 0 1.300-.500 1.300-1.400h.8c.9 0 1.300.600 1.300 1.400s-.400 1.400-1.300 1.400z" fill="#f5c92c" stroke="#f5c92c" stroke-width=".5"/></g></svg>
<span class="t" style="transform:translate(54.00px,173.55px) rotate(0.03deg);font-size:9.33px;color:#bbbbbb;">main_text_alltrain.py</span>
<svg class="b" style="left:43.2px;top:191.002px;" width="11" height="11" viewBox="0 0 11 11"><path d="M2.600.300H6.600V6H3.500v4.200H.300V2.600z" fill="#8193a0" opacity=".85"/><path d="M.300 2.600L2.600.300v2.300z" fill="#56636d"/><g transform="translate(1.900 1.300) scale(.82)"><path d="M3.400 4.300c0-.9.600-1.300 1.800-1.300s1.800.400 1.800 1.300v1.400H4.700c-.9 0-1.300.500-1.300 1.400H2.600c-.9 0-1.300-.600-1.300-1.400s.400-1.400 1.300-1.400z" fill="#3f9fe0" stroke="#3f9fe0" stroke-width=".5"/><path d="M7.700 9.400c0 .9-.600 1.300-1.800 1.300S4.100 10.300 4.100 9.400V8h2.300c.9 0 1.300-.500 1.300-1.400h.8c.9 0 1.300.600 1.300 1.400s-.400 1.400-1.300 1.400z" fill="#f5c92c" stroke="#f5c92c" stroke-width=".5"/></g></svg>
<span class="t" style="transform:translate(54.00px,187.62px) rotate(0.03deg);font-size:9.33px;color:#bbbbbb;">main_text_kfold.py</span>
<svg class="b" style="left:43px;top:204.77499999999998px;" width="10" height="10" viewBox="0 0 10 10"><path d="M1.500.5h5L9 3v6.500H1.500z" fill="#8b98a3" opacity=".8"/><rect x="3" y="4" width="4.500" height="4" fill="#4c9a6a"/></svg>
<span class="t" style="transform:translate(54.00px,201.70px) rotate(0.03deg);font-size:9.33px;color:#bbbbbb;">method_figure.png</span>
<svg class="b" style="left:43.2px;top:219.14800000000002px;" width="11" height="11" viewBox="0 0 11 11"><path d="M2.600.300H6.600V6H3.500v4.200H.300V2.600z" fill="#8193a0" opacity=".85"/><path d="M.300 2.600L2.600.300v2.300z" fill="#56636d"/><g transform="translate(1.900 1.300) scale(.82)"><path d="M3.400 4.300c0-.9.600-1.300 1.800-1.300s1.800.400 1.800 1.300v1.400H4.700c-.9 0-1.300.500-1.300 1.400H2.600c-.9 0-1.300-.600-1.300-1.400s.400-1.400 1.300-1.400z" fill="#3f9fe0" stroke="#3f9fe0" stroke-width=".5"/><path d="M7.700 9.400c0 .9-.600 1.300-1.800 1.300S4.100 10.300 4.100 9.400V8h2.300c.9 0 1.300-.500 1.300-1.400h.8c.9 0 1.300.600 1.300 1.400s-.400 1.400-1.300 1.400z" fill="#f5c92c" stroke="#f5c92c" stroke-width=".5"/></g></svg>
<span class="t" style="transform:translate(54.00px,215.77px) rotate(0.03deg);font-size:9.33px;color:#bbbbbb;">models.py</span>
<svg class="b" style="left:43.2px;top:233.221px;" width="11" height="11" viewBox="0 0 11 11"><path d="M2.600.300H6.600V6H3.500v4.200H.300V2.600z" fill="#8193a0" opacity=".85"/><path d="M.300 2.600L2.600.300v2.300z" fill="#56636d"/><g transform="translate(1.900 1.300) scale(.82)"><path d="M3.400 4.300c0-.9.600-1.300 1.800-1.300s1.800.400 1.800 1.300v1.400H4.700c-.9 0-1.300.500-1.300 1.400H2.600c-.9 0-1.300-.600-1.300-1.400s.400-1.400 1.300-1.400z" fill="#3f9fe0" stroke="#3f9fe0" stroke-width=".5"/><path d="M7.700 9.400c0 .9-.600 1.300-1.800 1.300S4.100 10.300 4.100 9.400V8h2.300c.9 0 1.300-.500 1.300-1.400h.8c.9 0 1.300.600 1.300 1.400s-.400 1.400-1.300 1.400z" fill="#f5c92c" stroke="#f5c92c" stroke-width=".5"/></g></svg>
<span class="t" style="transform:translate(54.00px,229.84px) rotate(0.03deg);font-size:9.33px;color:#bbbbbb;">predict_test_layout.py</span>
<svg class="b" style="left:43.2px;top:247.29400000000004px;" width="11" height="11" viewBox="0 0 11 11"><path d="M2.600.300H6.600V6H3.500v4.200H.300V2.600z" fill="#8193a0" opacity=".85"/><path d="M.300 2.600L2.600.300v2.300z" fill="#56636d"/><g transform="translate(1.900 1.300) scale(.82)"><path d="M3.400 4.300c0-.9.600-1.300 1.800-1.300s1.800.400 1.800 1.300v1.400H4.700c-.9 0-1.300.500-1.300 1.400H2.600c-.9 0-1.300-.600-1.300-1.400s.400-1.400 1.300-1.400z" fill="#3f9fe0" stroke="#3f9fe0" stroke-width=".5"/><path d="M7.700 9.400c0 .9-.600 1.300-1.800 1.300S4.100 10.300 4.100 9.400V8h2.300c.9 0 1.300-.500 1.300-1.400h.8c.9 0 1.300.600 1.300 1.400s-.400 1.400-1.300 1.400z" fill="#f5c92c" stroke="#f5c92c" stroke-width=".5"/></g></svg>
<span class="t" style="transform:translate(54.00px,243.92px) rotate(0.03deg);font-size:9.33px;color:#bbbbbb;">predict_test_layout_multi.py</span>
<svg class="b" style="left:43.2px;top:261.367px;" width="11" height="11" viewBox="0 0 11 11"><path d="M2.600.300H6.600V6H3.500v4.200H.300V2.600z" fill="#8193a0" opacity=".85"/><path d="M.300 2.600L2.600.300v2.300z" fill="#56636d"/><g transform="translate(1.900 1.300) scale(.82)"><path d="M3.400 4.300c0-.9.600-1.300 1.800-1.300s1.800.400 1.800 1.300v1.400H4.700c-.9 0-1.300.500-1.300 1.400H2.600c-.9 0-1.300-.600-1.300-1.400s.400-1.400 1.300-1.400z" fill="#3f9fe0" stroke="#3f9fe0" stroke-width=".5"/><path d="M7.700 9.400c0 .9-.600 1.300-1.800 1.300S4.100 10.300 4.100 9.400V8h2.300c.9 0 1.300-.500 1.300-1.400h.8c.9 0 1.300.600 1.300 1.400s-.400 1.400-1.300 1.400z" fill="#f5c92c" stroke="#f5c92c" stroke-width=".5"/></g></svg>
<span class="t" style="transform:translate(54.00px,257.99px) rotate(0.03deg);font-size:9.33px;color:#bbbbbb;">predict_test_origin_image.py</span>
<svg class="b" style="left:43.2px;top:275.44000000000005px;" width="11" height="11" viewBox="0 0 11 11"><path d="M2.600.300H6.600V6H3.500v4.200H.300V2.600z" fill="#8193a0" opacity=".85"/><path d="M.300 2.600L2.600.300v2.300z" fill="#56636d"/><g transform="translate(1.900 1.300) scale(.82)"><path d="M3.400 4.300c0-.9.600-1.300 1.800-1.300s1.800.400 1.800 1.300v1.400H4.700c-.9 0-1.300.500-1.300 1.400H2.600c-.9 0-1.300-.600-1.300-1.400s.400-1.400 1.300-1.400z" fill="#3f9fe0" stroke="#3f9fe0" stroke-width=".5"/><path d="M7.700 9.400c0 .9-.600 1.300-1.800 1.300S4.100 10.300 4.100 9.400V8h2.300c.9 0 1.300-.500 1.300-1.400h.8c.9 0 1.300.600 1.300 1.400s-.400 1.400-1.300 1.400z" fill="#f5c92c" stroke="#f5c92c" stroke-width=".5"/></g></svg>
<span class="t" style="transform:translate(54.00px,272.06px) rotate(0.03deg);font-size:9.33px;color:#bbbbbb;">predict_test_origin_multi.py</span>
<svg class="b" style="left:43.2px;top:289.51300000000003px;" width="11" height="11" viewBox="0 0 11 11"><path d="M2.600.300H6.600V6H3.500v4.200H.300V2.600z" fill="#8193a0" opacity=".85"/><path d="M.300 2.600L2.600.300v2.300z" fill="#56636d"/><g transform="translate(1.900 1.300) scale(.82)"><path d="M3.400 4.300c0-.9.600-1.300 1.800-1.300s1.800.400 1.800 1.300v1.400H4.700c-.9 0-1.300.500-1.300 1.400H2.600c-.9 0-1.300-.600-1.300-1.400s.400-1.400 1.300-1.400z" fill="#3f9fe0" stroke="#3f9fe0" stroke-width=".5"/><path d="M7.700 9.400c0 .9-.600 1.300-1.800 1.300S4.100 10.300 4.100 9.400V8h2.300c.9 0 1.300-.500 1.300-1.400h.8c.9 0 1.300.600 1.300 1.400s-.400 1.400-1.300 1.400z" fill="#f5c92c" stroke="#f5c92c" stroke-width=".5"/></g></svg>
<span class="t" style="transform:translate(54.00px,286.13px) rotate(0.03deg);font-size:9.33px;color:#bbbbbb;">predict_test_origin_text.py</span>
<svg class="b" style="left:42px;top:303.286px;" width="11" height="10" viewBox="0 0 11 10"><path d="M2 .5h5L9.500 3v4H2z" fill="#8b98a3" opacity=".8"/><rect x="0" y="6" width="10" height="4" fill="#3d87b5"/></svg>
<span class="t" style="transform:translate(54.00px,300.21px) rotate(0.03deg) scaleX(0.9338);font-size:9.33px;color:#bbbbbb;">README.md</span>
<svg class="b" style="left:43px;top:317.35900000000004px;" width="10" height="10" viewBox="0 0 10 10"><path d="M1.500.5h5L9 3v6.500H1.500z" fill="#8b98a3" opacity=".8"/><path d="M3 4.500h4.500M3 6h4.500M3 7.500h4.500" stroke="#3c3f41" stroke-width=".6"/></svg>
<span class="t" style="transform:translate(54.00px,314.28px) rotate(0.03deg);font-size:9.33px;color:#bbbbbb;">requirements.txt</span>
<svg class="b" style="left:42px;top:331.432px;" width="11" height="10" viewBox="0 0 11 10"><rect x=".5" y="1" width="10" height="8" rx="1" fill="#9aa7b0"/><path d="M2.500 3l2.500 2-2.500 2" stroke="#3c3f41" stroke-width="1.200" fill="none"/></svg>
<span class="t" style="transform:translate(54.00px,328.35px) rotate(0.03deg);font-size:9.33px;color:#bbbbbb;">run.sh</span>
<svg class="b" style="left:43.2px;top:345.805px;" width="11" height="11" viewBox="0 0 11 11"><path d="M2.600.300H6.600V6H3.500v4.200H.300V2.600z" fill="#8193a0" opacity=".85"/><path d="M.300 2.600L2.600.300v2.300z" fill="#56636d"/><g transform="translate(1.900 1.300) scale(.82)"><path d="M3.400 4.300c0-.9.600-1.300 1.800-1.300s1.800.400 1.800 1.300v1.400H4.700c-.9 0-1.300.500-1.300 1.400H2.600c-.9 0-1.300-.600-1.300-1.400s.400-1.400 1.300-1.400z" fill="#3f9fe0" stroke="#3f9fe0" stroke-width=".5"/><path d="M7.700 9.400c0 .9-.600 1.300-1.800 1.300S4.100 10.300 4.100 9.400V8h2.300c.9 0 1.300-.500 1.300-1.400h.8c.9 0 1.300.600 1.300 1.400s-.400 1.400-1.300 1.400z" fill="#f5c92c" stroke="#f5c92c" stroke-width=".5"/></g></svg>
<span class="t" style="transform:translate(54.00px,342.43px) rotate(0.03deg);font-size:9.33px;color:#bbbbbb;">utils.py</span>
</div>
<div class="b" style="left:231px;top:275px;width:5px;height:125px;background:#595b5d;"></div>
<div class="b" style="left:17px;top:412px;width:192px;height:5.5px;background:rgba(120,122,124,.55);"></div>
<div class="b" style="left:0;top:58px;width:1066px;height:342px;overflow:hidden">
<span class="ln" style="top:-1px;transform:translateY(0.5px) scaleY(1.1) rotate(0.03deg)">173</span>
<span class="ln" style="top:14px;transform:translateY(0.96px) scaleY(1.1) rotate(0.03deg)">174</span>
<span class="c" style="top:14px;transform:translateY(0.96px) scaleY(1.1) rotate(0.03deg)"><span class="k">def</span> <span class="f">train</span>(model_args<span class="k">,</span> data_args<span class="k">,</span> training_args<span class="k">,</span> train_dataset<span class="k">,</span> eval_dataset<span class="k">,</span> model<span class="k">,</span> data_collator):  <span class="cm"># noqa C901</span></span>
<span class="ln" style="top:30px;transform:translateY(0.43px) scaleY(1.1) rotate(0.03deg)">175</span>
<span class="c" style="top:30px;transform:translateY(0.43px) scaleY(1.1) rotate(0.03deg)">    <i>""" Train the model """</i></span>
<span class="ln" style="top:45px;transform:translateY(0.89px) scaleY(1.1) rotate(0.03deg)">176</span>
<span class="ln" style="top:61px;transform:translateY(0.36px) scaleY(1.1) rotate(0.03deg)">177</span>
<span class="c" style="top:61px;transform:translateY(0.36px) scaleY(1.1) rotate(0.03deg)">    train_batch_size = training_args.per_gpu_train_batch_size * <span class="bi">max</span>(<span class="n">1</span><span class="k">,</span> training_args.n_gpu)</span>
<span class="ln" style="top:76px;transform:translateY(0.82px) scaleY(1.1) rotate(0.03deg)">178</span>
<span class="ln" style="top:92px;transform:translateY(0.28px) scaleY(1.1) rotate(0.03deg)">179</span>
<span class="c" style="top:92px;transform:translateY(0.28px) scaleY(1.1) rotate(0.03deg)">    train_sampler = (</span>
<span class="ln" style="top:107px;transform:translateY(0.75px) scaleY(1.1) rotate(0.03deg)">180</span>
<span class="c" style="top:107px;transform:translateY(0.75px) scaleY(1.1) rotate(0.03deg)">        RandomSampler(train_dataset)</span>
<span class="ln" style="top:123px;transform:translateY(0.21px) scaleY(1.1) rotate(0.03deg)">181</span>
<span class="c" style="top:123px;transform:translateY(0.21px) scaleY(1.1) rotate(0.03deg)">        <span class="k">if</span> training_args.local_rank == -<span class="n">1</span></span>
<span class="ln" style="top:138px;transform:translateY(0.68px) scaleY(1.1) rotate(0.03deg)">182</span>
<span class="c" style="top:138px;transform:translateY(0.68px) scaleY(1.1) rotate(0.03deg)">        <span class="k">else</span> DistributedSampler(train_dataset)</span>
<span class="ln" style="top:154px;transform:translateY(0.14px) scaleY(1.1) rotate(0.03deg)">183</span>
<span class="c" style="top:154px;transform:translateY(0.14px) scaleY(1.1) rotate(0.03deg)">    )</span>
<span class="ln" style="top:169px;transform:translateY(0.6px) scaleY(1.1) rotate(0.03deg)">184</span>
<span class="c" style="top:169px;transform:translateY(0.6px) scaleY(1.1) rotate(0.03deg)">    train_dataloader = DataLoader(</span>
<span class="ln" style="top:185px;transform:translateY(0.07px) scaleY(1.1) rotate(0.03deg)">185</span>
<span class="c" style="top:185px;transform:translateY(0.07px) scaleY(1.1) rotate(0.03deg)">        train_dataset<span class="k">,</span> <span class="kw">sampler</span>=train_sampler<span class="k">,</span> <span class="kw">batch_size</span>=train_batch_size<span class="k">,</span> <span class="kw">collate_fn</span>=data_collator</span>
<span class="ln" style="top:200px;transform:translateY(0.53px) scaleY(1.1) rotate(0.03deg)">186</span>
<span class="c" style="top:200px;transform:translateY(0.53px) scaleY(1.1) rotate(0.03deg)">    )</span>
<span class="ln" style="top:215px;transform:translateY(1.0px) scaleY(1.1) rotate(0.03deg)">187</span>
<span class="ln" style="top:231px;transform:translateY(0.46px) scaleY(1.1) rotate(0.03deg)">188</span>
<span class="c" style="top:231px;transform:translateY(0.46px) scaleY(1.1) rotate(0.03deg)">    <span class="k">if</span> training_args.max_steps &gt; <span class="n">0</span>:</span>
<span class="ln" style="top:246px;transform:translateY(0.92px) scaleY(1.1) rotate(0.03deg)">189</span>
<span class="c" style="top:246px;transform:translateY(0.92px) scaleY(1.1) rotate(0.03deg)">        t_total = training_args.max_steps</span>
<span class="ln" style="top:262px;transform:translateY(0.39px) scaleY(1.1) rotate(0.03deg)">190</span>
<span class="c" style="top:262px;transform:translateY(0.39px) scaleY(1.1) rotate(0.03deg)">        training_args.num_train_epochs = (</span>
<span class="ln" style="top:277px;transform:translateY(0.85px) scaleY(1.1) rotate(0.03deg)">191</span>
<span class="c" style="top:277px;transform:translateY(0.85px) scaleY(1.1) rotate(0.03deg)">            training_args.max_steps</span>
<span class="ln" style="top:293px;transform:translateY(0.32px) scaleY(1.1) rotate(0.03deg)">192</span>
<span class="c" style="top:293px;transform:translateY(0.32px) scaleY(1.1) rotate(0.03deg)">            // (<span class="bi">len</span>(train_dataloader) // training_args.gradient_accumulation_steps)</span>
<span class="ln" style="top:308px;transform:translateY(0.78px) scaleY(1.1) rotate(0.03deg)">193</span>
<span class="c" style="top:308px;transform:translateY(0.78px) scaleY(1.1) rotate(0.03deg)">            + <span class="n">1</span></span>
<span class="ln" style="top:324px;transform:translateY(0.24px) scaleY(1.1) rotate(0.03deg)">194</span>
<span class="c" style="top:324px;transform:translateY(0.24px) scaleY(1.1) rotate(0.03deg)">        )</span>
</div>
<div class="b" style="left:310px;top:165px;width:1px;height:46px;background:#363636;"></div>
<div class="b" style="left:310px;top:242px;width:1px;height:16px;background:#363636;"></div>
<div class="b" style="left:310px;top:304px;width:1px;height:91px;background:#363636;"></div>
<svg class="b" style="left:279.5px;top:74.5px;" width="8" height="9" viewBox="0 0 8 9"><path d="M.5.5h7v5L4 8.500.5 5.500z" fill="#2b2b2b" stroke="#606366" stroke-width=".8"/><path d="M2.200 3.700h3.600" stroke="#606366" stroke-width=".8"/></svg>
<svg class="b" style="left:279.5px;top:291px;" width="8" height="9" viewBox="0 0 8 9"><path d="M.5.5h7v5L4 8.500.5 5.500z" fill="#2b2b2b" stroke="#606366" stroke-width=".8"/><path d="M2.200 3.700h3.600" stroke="#606366" stroke-width=".8"/></svg>
<svg class="b" style="left:279.5px;top:383px;" width="8" height="9" viewBox="0 0 8 9"><path d="M.5 8.500h7v-5L4 .5.5 3.500z" fill="#2b2b2b" stroke="#606366" stroke-width=".8"/><path d="M2.200 5.300h3.600" stroke="#606366" stroke-width=".8"/></svg>
<div class="b" style="left:288px;top:394px;width:650px;height:6px;background:#4d4f51;"></div>
<div class="b" style="left:1058px;top:148.5px;width:7px;height:23px;background:#58595b;"></div>
<svg class="b" style="left:959.5px;top:64.8px;" width="8.4" height="8.4" viewBox="0 0 9 9"><path d="M4.500 .3L9 8.700H0z" fill="#e8a634"/><path d="M4.500 3.200v2.800M4.500 6.800v1" stroke="#2b2b2b" stroke-width="1.100"/></svg>
<span class="t" style="transform:translate(969.30px,60.91px) rotate(0.03deg);font-size:9.3px;color:#bbbbbb;">21</span>
<svg class="b" style="left:985.2px;top:64.8px;" width="8.4" height="8.4" viewBox="0 0 9 9"><path d="M4.500 .3L9 8.700H0z" fill="#a9a283"/><path d="M4.500 3.200v2.800M4.500 6.800v1" stroke="#2b2b2b" stroke-width="1.100"/></svg>
<span class="t" style="transform:translate(996.00px,60.91px) rotate(0.03deg);font-size:9.3px;color:#bbbbbb;">17</span>
<svg class="b" style="left:1010px;top:64px;" width="10" height="10" viewBox="0 0 10 10"><path d="M1 4.800l2.500 2.500L8.500 1.300" stroke="#59a869" stroke-width="1.400" fill="none"/><path d="M.8 8.800l1.400-1 1.400 1 1.400-1 1.400 1 1.400-1 1.400 1" stroke="#59a869" stroke-width=".8" fill="none"/></svg>
<span class="t" style="transform:translate(1021.40px,60.91px) rotate(0.03deg);font-size:9.3px;color:#bbbbbb;">42</span>
<svg class="b" style="left:1038.5px;top:66px;" width="8" height="6" viewBox="0 0 8 6"><path d="M1.200 4.600l2.800-2.800 2.800 2.800" stroke="#c8cacc" stroke-width="1.300" fill="none"/></svg>
<svg class="b" style="left:1052.7px;top:66.5px;" width="8" height="6" viewBox="0 0 8 6"><path d="M1.200 1.400l2.800 2.800 2.800-2.800" stroke="#c8cacc" stroke-width="1.300" fill="none"/></svg>
<div class="b" style="left:1055px;top:80px;width:10px;height:6.5px;background:#d6a632;"></div>
<div class="b" style="left:1055px;top:88.5px;width:10px;height:3.5px;background:#c9a035;"></div>
<div class="b" style="left:1055px;top:95.5px;width:10px;height:1px;background:#3b7a3b;"></div>
<div class="b" style="left:1055px;top:188.2px;width:10px;height:1.2px;background:#d6a632;"></div>
<div class="b" style="left:1055px;top:206.2px;width:10px;height:1.2px;background:#d6a632;"></div>
<div class="b" style="left:1055px;top:216.7px;width:10px;height:1px;background:#a8923c;"></div>
<div class="b" style="left:1055px;top:219.2px;width:10px;height:1px;background:#a8923c;"></div>
<div class="b" style="left:1055px;top:221.5px;width:10px;height:1px;background:#8d8258;"></div>
<div class="b" style="left:1055px;top:226.8px;width:10px;height:1px;background:#8d8258;"></div>
<div class="b" style="left:1055px;top:236.2px;width:10px;height:1.3px;background:#d6a632;"></div>
<div class="b" style="left:1055px;top:241.2px;width:10px;height:1px;background:#8d8258;"></div>
<div class="b" style="left:1055px;top:244.5px;width:10px;height:1px;background:#8d8258;"></div>
<div class="b" style="left:1055px;top:264px;width:10px;height:4px;background:#d6a632;"></div>
<div class="b" style="left:1055px;top:268px;width:10px;height:1px;background:#c58a4a;"></div>
<div class="b" style="left:1055px;top:275.7px;width:10px;height:1px;background:#8d8258;"></div>
<div class="b" style="left:1055px;top:280.3px;width:10px;height:1px;background:#8d8258;"></div>
<div class="b" style="left:1055px;top:294.3px;width:10px;height:1px;background:#7d775c;"></div>
<div class="b" style="left:1055px;top:303px;width:10px;height:1.2px;background:#2f7d3a;"></div>
<div class="b" style="left:1055px;top:307.6px;width:10px;height:1.3px;background:#d6a632;"></div>
<div class="b" style="left:1055px;top:324.7px;width:10px;height:1px;background:#7d775c;"></div>
<div class="b" style="left:1055px;top:333px;width:10px;height:1px;background:#7d775c;"></div>
<div class="b" style="left:1055px;top:374.2px;width:10px;height:1px;background:#7d775c;"></div>
<div class="b" style="left:1055px;top:378px;width:10px;height:1px;background:#7d775c;"></div>
<div class="b" style="left:1055px;top:394.8px;width:10px;height:1px;background:#8d8258;"></div>
<span class="t" style="transform:translate(291.00px,401.89px) rotate(0.03deg);font-size:9.2px;color:#a0a2a4;">main()</span>
<svg class="b" style="left:321px;top:405px;" width="6" height="10" viewBox="0 0 6 10"><path d="M1.500 1.500l3 3.500-3 3.500" stroke="#6e7072" stroke-width=".8" fill="none"/></svg>
<span class="t" style="transform:translate(333.00px,401.89px) rotate(0.03deg);font-size:9.2px;color:#a0a2a4;">for dataset_name in [&#x27;gun_contr...</span>
<div class="b" style="left:1066px;top:40px;width:14px;height:537px;background:#3c3f41;"></div>
<div class="b" style="left:1066px;top:58px;width:1px;height:360px;background:#353739;"></div>
<svg class="b" style="left:1069px;top:48.5px;" width="8" height="8" viewBox="0 0 8 8"><rect x=".5" y=".5" width="7" height="2" fill="#afb1b3"/><rect x=".5" y="3" width="7" height="2" fill="#afb1b3"/><rect x=".5" y="5.500" width="7" height="2" fill="#afb1b3"/></svg>
<span class="v" style="left:1078.5px;top:60.5px;transform:rotate(90deg);font-size:7.9px;color:#bbbbbb;">Remote Host</span>
<svg class="b" style="left:1069px;top:121px;" width="8" height="9" viewBox="0 0 8 9"><ellipse cx="4" cy="2" rx="3.500" ry="1.500" fill="#afb1b3"/><path d="M.5 2v5c0 .8 1.600 1.500 3.500 1.500s3.500-.7 3.500-1.500V2" fill="#afb1b3" opacity=".85"/></svg>
<span class="v" style="left:1078.5px;top:133px;transform:rotate(90deg);font-size:7.9px;color:#bbbbbb;">Database</span>
<svg class="b" style="left:1069px;top:182px;" width="8" height="8" viewBox="0 0 8 8"><path d="M1 1h6v6H1zM1 3h6M1 5h6M3 1v6M5 1v6" stroke="#afb1b3" stroke-width=".9" fill="none"/></svg>
<span class="v" style="left:1078.5px;top:192px;transform:rotate(90deg);font-size:7.9px;color:#bbbbbb;">SciView</span>
<div class="b" style="left:17px;top:418px;width:1049px;height:1px;background:#323232;"></div>
<span class="t" style="transform:translate(20.00px,419.91px) rotate(0.03deg);font-size:9.3px;color:#bbbbbb;">Version Control:</span>
<span class="t" style="transform:translate(99.00px,419.91px) rotate(0.03deg);font-size:9.3px;color:#bbbbbb;">Log</span>
<div class="b" style="left:91px;top:436px;width:32px;height:2px;background:#747a80;"></div>
<svg class="b" style="left:1032.2px;top:422.7px;" width="10.6" height="10.6" viewBox="0 0 12 12"><path d="M9.78 5.04L11.12 5.11L11.12 6.89L9.78 6.96L9.35 8.00L10.25 8.99L8.99 10.25L8.00 9.35L6.96 9.78L6.89 11.12L5.11 11.12L5.04 9.78L4.00 9.35L3.01 10.25L1.75 8.99L2.65 8.00L2.22 6.96L0.88 6.89L0.88 5.11L2.22 5.04L2.65 4.00L1.75 3.01L3.01 1.75L4.00 2.65L5.04 2.22L5.11 0.88L6.89 0.88L6.96 2.22L8.00 2.65L8.99 1.75L10.25 3.01L9.35 4.00z" fill="#c4c6c8"/><circle cx="6" cy="6" r="1.900" fill="#3c3f41"/></svg>
<svg class="b" style="left:1050.5px;top:422px;" width="12" height="12" viewBox="0 0 12 12"><path d="M1.500 6h9" stroke="#c4c6c8" stroke-width="1.300"/></svg>
<div class="b" style="left:35px;top:438px;width:1px;height:139px;background:#37393b;"></div>
<svg class="b" style="left:21px;top:443px;" width="9" height="10" viewBox="0 0 9 10"><path d="M6.500 1L2 5l4.500 4" stroke="#d0d2d4" stroke-width="1.500" fill="none"/></svg>
<div class="b" style="left:20px;top:459px;width:12px;height:1px;background:#505254;"></div>
<svg class="b" style="left:21px;top:467px;" width="9" height="9" viewBox="0 0 9 9"><path d="M4.500 1v7M1 4.500h7" stroke="#5c5f61" stroke-width="1.100"/></svg>
<svg class="b" style="left:21px;top:485px;" width="9" height="9" viewBox="0 0 9 9"><path d="M7.500 1.500l-6 6M1.500 3.500v4h4" stroke="#5c5f61" stroke-width="1.100" fill="none"/></svg>
<svg class="b" style="left:21px;top:503.5px;" width="9" height="10" viewBox="0 0 9 10"><path d="M1 2h7M3 2V.8h3V2M1.800 2.500h5.400V9.500H1.800z" fill="#5c5f61" stroke="#5c5f61" stroke-width=".6"/></svg>
<svg class="b" style="left:21px;top:521px;" width="9" height="9" viewBox="0 0 9 9"><path d="M1 7.500L4 4.500M4.500 1.500v3h3M7.500 1.500l-3 3" stroke="#5c5f61" stroke-width="1.100" fill="none"/></svg>
<svg class="b" style="left:19px;top:539px;" width="12" height="12" viewBox="0 0 12 12"><circle cx="5" cy="5" r="3.300" stroke="#d0d2d4" stroke-width="1.400" fill="none"/><path d="M7.500 7.500L10.500 10.500" stroke="#d0d2d4" stroke-width="1.600"/></svg>
<span class="t" style="transform:translate(22.00px,561.84px) rotate(0.03deg);font-size:9px;color:#8a8c8e;">»</span>
<svg class="b" style="left:44px;top:443px;" width="10" height="10" viewBox="0 0 10 10"><circle cx="4.200" cy="4.200" r="3" stroke="#8a8c8e" stroke-width="1" fill="none"/><path d="M6.500 6.500L9 9" stroke="#8a8c8e" stroke-width="1"/></svg>
<div class="b" style="left:36px;top:459px;width:221px;height:1px;background:#37393b;"></div>
<span class="t" style="transform:translate(53.50px,458.78px) rotate(0.03deg);font-size:8.778px;color:#bbbbbb;">HEAD (Current Branch)</span>
<svg class="b" style="left:41px;top:479px;" width="7" height="5" viewBox="0 0 7 5"><path d="M.8.800L3.500 3.500 6.200.800" stroke="#afb1b3" stroke-width="1" fill="none"/></svg>
<span class="t" style="transform:translate(53.00px,472.89px) rotate(0.03deg);font-size:9.2px;color:#bbbbbb;">Local</span>
<svg class="b" style="left:66px;top:490px;" width="10" height="10" viewBox="0 0 10 10"><path d="M1 1.500h3.500L9 6 6 9 1.500 4.500z" stroke="#c9a23a" stroke-width="1" fill="none"/><circle cx="3.200" cy="3.500" r=".7" fill="#c9a23a"/></svg>
<span class="t" style="transform:translate(79.00px,486.89px) rotate(0.03deg);font-size:9.2px;color:#bbbbbb;">main</span>
<svg class="b" style="left:41px;top:507px;" width="7" height="5" viewBox="0 0 7 5"><path d="M.8.800L3.500 3.500 6.200.800" stroke="#afb1b3" stroke-width="1" fill="none"/></svg>
<span class="t" style="transform:translate(53.00px,500.89px) rotate(0.03deg);font-size:9.2px;color:#bbbbbb;">Remote</span>
<svg class="b" style="left:54px;top:521px;" width="7" height="5" viewBox="0 0 7 5"><path d="M.8.800L3.500 3.500 6.200.800" stroke="#afb1b3" stroke-width="1" fill="none"/></svg>
<svg class="b" style="left:66px;top:518px;" width="11" height="9" viewBox="0 0 11 9"><path d="M.5 1h3.500l1 1.200h5.500V8.500H.5z" fill="#afb1b3"/></svg>
<span class="t" style="transform:translate(79.00px,514.89px) rotate(0.03deg);font-size:9.2px;color:#bbbbbb;">origin</span>
<svg class="b" style="left:79px;top:532px;" width="8" height="10" viewBox="0 0 8 10"><path d="M2 .5v9M2 6.500c3.500 0 4.500-1.500 4.500-5" stroke="#afb1b3" stroke-width="1.300" fill="none"/><circle cx="2" cy="1.500" r="1.200" fill="#afb1b3"/><circle cx="6.500" cy="1.500" r="1.200" fill="#afb1b3"/></svg>
<span class="t" style="transform:translate(92.00px,528.89px) rotate(0.03deg);font-size:9.2px;color:#bbbbbb;">main</span>
<div class="b" style="left:257.2px;top:438px;width:1.4px;height:139px;background:#2f3133;"></div>
<div class="b" style="left:259px;top:460px;width:563px;height:117px;background:#404b4d;"></div>
<div class="b" style="left:260.2px;top:440.3px;width:115.5px;height:16.2px;background:#43474a;border:1px solid #5b5e60;box-sizing:border-box"></div>
<svg class="b" style="left:264px;top:444px;" width="13" height="10" viewBox="0 0 13 10"><circle cx="4.200" cy="4.200" r="3" stroke="#8a8c8e" stroke-width="1" fill="none"/><path d="M6.500 6.500L9 9" stroke="#8a8c8e" stroke-width="1"/><path d="M9.500 4h3l-1.500 1.800z" fill="#8a8c8e"/></svg>
<svg class="b" style="left:383.8px;top:443.3px;" width="10.5" height="10.5" viewBox="0 0 12 12"><path d="M9.78 5.04L11.12 5.11L11.12 6.89L9.78 6.96L9.35 8.00L10.25 8.99L8.99 10.25L8.00 9.35L6.96 9.78L6.89 11.12L5.11 11.12L5.04 9.78L4.00 9.35L3.01 10.25L1.75 8.99L2.65 8.00L2.22 6.96L0.88 6.89L0.88 5.11L2.22 5.04L2.65 4.00L1.75 3.01L3.01 1.75L4.00 2.65L5.04 2.22L5.11 0.88L6.89 0.88L6.96 2.22L8.00 2.65L8.99 1.75L10.25 3.01L9.35 4.00z" fill="#c4c6c8"/><circle cx="6" cy="6" r="1.900" fill="#3c3f41"/></svg>
<svg class="b" style="left:390.5px;top:452px;" width="5" height="3" viewBox="0 0 5 3"><path d="M.3.300h4.400L2.500 2.800z" fill="#c4c6c8"/></svg>
<div class="b" style="left:399px;top:442px;width:1px;height:13px;background:#4b4e50;"></div>
<span class="t" style="transform:translate(405.00px,440.39px) rotate(0.03deg);font-size:9.2px;color:#bbbbbb;">Branch: All</span>
<svg class="b" style="left:452px;top:445.5px;" width="4" height="7" viewBox="0 0 4 7"><path d="M.3 2.600L2 .6l1.700 2zM.3 4.400L2 6.400l1.700-2z" fill="#afb1b3"/></svg>
<span class="t" style="transform:translate(461.00px,440.39px) rotate(0.03deg);font-size:9.2px;color:#bbbbbb;">User: All</span>
<svg class="b" style="left:499px;top:445.5px;" width="4" height="7" viewBox="0 0 4 7"><path d="M.3 2.600L2 .6l1.700 2zM.3 4.400L2 6.400l1.700-2z" fill="#afb1b3"/></svg>
<span class="t" style="transform:translate(508.00px,440.39px) rotate(0.03deg);font-size:9.2px;color:#bbbbbb;">Date: All</span>
<svg class="b" style="left:546px;top:445.5px;" width="4" height="7" viewBox="0 0 4 7"><path d="M.3 2.600L2 .6l1.700 2zM.3 4.400L2 6.400l1.700-2z" fill="#afb1b3"/></svg>
<span class="t" style="transform:translate(555.00px,440.39px) rotate(0.03deg);font-size:9.2px;color:#bbbbbb;">Paths: All</span>
<svg class="b" style="left:596px;top:445.5px;" width="4" height="7" viewBox="0 0 4 7"><path d="M.3 2.600L2 .6l1.700 2zM.3 4.400L2 6.400l1.700-2z" fill="#afb1b3"/></svg>
<div class="b" style="left:604.3px;top:442px;width:1px;height:13px;background:#4b4e50;"></div>
<svg class="b" style="left:610px;top:442px;" width="12" height="12" viewBox="0 0 12 12"><path d="M9.300 5.300A3.400 3.400 0 003 4.400M2.700 6.700A3.400 3.400 0 009 7.600" stroke="#c4c6c8" stroke-width="1.500" fill="none"/><path d="M10.200 2.300v3.400H6.800zM1.800 9.700V6.300h3.400z" fill="#c4c6c8"/></svg>
<svg class="b" style="left:629px;top:442.5px;" width="12" height="12" viewBox="0 0 12 12"><circle cx="4" cy="8.300" r="1.900" fill="#55585a"/><circle cx="8.300" cy="7.800" r="1.900" fill="#55585a"/><path d="M4 7c0-3 2-5 5-5.500M8.300 6.300c0-2 .2-3.300.5-4.800" stroke="#55585a" stroke-width=".9" fill="none"/></svg>
<svg class="b" style="left:647px;top:442px;" width="12" height="12" viewBox="0 0 12 12"><path d="M3.200 2v6.500M8.500 3.500v5" stroke="#c4c6c8" stroke-width="1.400"/><path d="M.8 6.800L3.200 10.200l2.400-3.400zM6.500 4.400L8.500 1.800l2 2.600zM6.500 7.600L8.500 10.200l2-2.600z" fill="#c4c6c8"/></svg>
<svg class="b" style="left:665px;top:442.3px;" width="13" height="13" viewBox="0 0 13 13"><path d="M.8 5.800C2.500 3 4.300 2.200 6 2.200S9.500 3 11.200 5.800C9.500 8.600 7.700 9.400 6 9.400S2.500 8.600.8 5.800z" stroke="#c4c6c8" stroke-width="1.300" fill="none"/><circle cx="6" cy="5.800" r="1.800" fill="#c4c6c8"/><path d="M9 10.300h3.200L10.600 12.200z" fill="#c4c6c8"/></svg>
<div class="b" style="left:682px;top:442px;width:1px;height:13px;background:#4b4e50;"></div>
<svg class="b" style="left:687.8px;top:442px;" width="13" height="12" viewBox="0 0 13 12"><path d="M.8 10.200h1.400V3.300c0-.8.500-1.300 1.300-1.300h5c.8 0 1.300.5 1.300 1.300v6.900h1.400" stroke="#c4c6c8" stroke-width="1.100" fill="none"/><path d="M6 3.800v4.400M3.800 6h4.400" stroke="#c4c6c8" stroke-width="1.200"/></svg>
<svg class="b" style="left:806px;top:443px;" width="12" height="12" viewBox="0 0 12 12"><circle cx="4.800" cy="4.800" r="3.400" stroke="#c4c6c8" stroke-width="1.400" fill="none"/><path d="M7.300 7.300L11 11" stroke="#c4c6c8" stroke-width="1.600"/></svg>
<div class="b" style="left:259px;top:459px;width:563px;height:118px;overflow:hidden">
<span class="t" style="transform:translate(10.00px,0.41px) rotate(0.03deg);font-size:8.92px;color:#cfcfcf;font-weight:bold;">fix mistakes in readme</span>
<svg class="b" style="left:390.1px;top:4.800000000000023px;" width="8.4" height="7.8" viewBox="0 0 8.800 8.200"><path d="M.6 1h2.400v6H.6zM.6 4h2.400M4 1.200h4.400M6.200 0v3.600M4.300 2.400h3.800M3.800 3.700h4.800M4.700 4.800h3.300V8H4.700zM4.700 5.900h3.300M4.700 7h3.300" stroke="#d4d4d4" stroke-width="1" fill="none"/></svg>
<svg class="b" style="left:400.7px;top:4.500000000000023px;" width="8.4" height="7.8" viewBox="0 0 8.800 8.200"><path d="M4.300 0v1.200M.6 3V1.400h7.400V3M2.200 3h4.200M.8 4.700h7.000M4.300 4.700V8M2.600 6L1 7.700M6 6l1.600 1.700" stroke="#d4d4d4" stroke-width="1.050" fill="none"/></svg>
<span class="t" style="transform:translate(458.00px,0.50px) rotate(0.03deg);font-size:9.25px;color:#cfcfcf;font-weight:bold;">2023/10/6 18:19</span>
<span class="t" style="transform:translate(10.00px,17.31px) rotate(0.03deg);font-size:8.92px;color:#cfcfcf;font-weight:bold;">fix mistakes in readme</span>
<svg class="b" style="left:390.1px;top:21.7px;" width="8.4" height="7.8" viewBox="0 0 8.800 8.200"><path d="M.6 1h2.400v6H.6zM.6 4h2.400M4 1.200h4.400M6.200 0v3.600M4.300 2.400h3.800M3.800 3.700h4.800M4.700 4.800h3.300V8H4.700zM4.700 5.900h3.300M4.700 7h3.300" stroke="#d4d4d4" stroke-width="1" fill="none"/></svg>
<svg class="b" style="left:400.7px;top:21.4px;" width="8.4" height="7.8" viewBox="0 0 8.800 8.200"><path d="M4.300 0v1.200M.6 3V1.400h7.400V3M2.200 3h4.200M.8 4.700h7.000M4.300 4.700V8M2.600 6L1 7.700M6 6l1.600 1.700" stroke="#d4d4d4" stroke-width="1.050" fill="none"/></svg>
<span class="t" style="transform:translate(458.00px,17.40px) rotate(0.03deg);font-size:9.25px;color:#cfcfcf;font-weight:bold;">2023/10/6 18:17</span>
<span class="t" style="transform:translate(10.00px,34.21px) rotate(0.03deg);font-size:8.92px;color:#cfcfcf;font-weight:bold;">add training steps in readme</span>
<svg class="b" style="left:390.1px;top:38.60000000000004px;" width="8.4" height="7.8" viewBox="0 0 8.800 8.200"><path d="M.6 1h2.400v6H.6zM.6 4h2.400M4 1.200h4.400M6.200 0v3.600M4.300 2.400h3.800M3.800 3.700h4.800M4.700 4.800h3.300V8H4.700zM4.700 5.900h3.300M4.700 7h3.300" stroke="#d4d4d4" stroke-width="1" fill="none"/></svg>
<svg class="b" style="left:400.7px;top:38.30000000000003px;" width="8.4" height="7.8" viewBox="0 0 8.800 8.200"><path d="M4.300 0v1.200M.6 3V1.400h7.400V3M2.200 3h4.200M.8 4.700h7.000M4.300 4.700V8M2.600 6L1 7.700M6 6l1.600 1.700" stroke="#d4d4d4" stroke-width="1.050" fill="none"/></svg>
<span class="t" style="transform:translate(458.00px,34.30px) rotate(0.03deg);font-size:9.25px;color:#cfcfcf;font-weight:bold;">2023/10/6 18:13</span>
<span class="t" style="transform:translate(10.00px,51.11px) rotate(0.03deg);font-size:8.92px;color:#cfcfcf;font-weight:bold;">add examples</span>
<svg class="b" style="left:390.1px;top:55.50000000000007px;" width="8.4" height="7.8" viewBox="0 0 8.800 8.200"><path d="M.6 1h2.400v6H.6zM.6 4h2.400M4 1.200h4.400M6.200 0v3.600M4.300 2.400h3.800M3.800 3.700h4.800M4.700 4.800h3.300V8H4.700zM4.700 5.900h3.300M4.700 7h3.300" stroke="#d4d4d4" stroke-width="1" fill="none"/></svg>
<svg class="b" style="left:400.7px;top:55.20000000000007px;" width="8.4" height="7.8" viewBox="0 0 8.800 8.200"><path d="M4.300 0v1.200M.6 3V1.400h7.400V3M2.200 3h4.200M.8 4.700h7.000M4.300 4.700V8M2.600 6L1 7.700M6 6l1.600 1.700" stroke="#d4d4d4" stroke-width="1.050" fill="none"/></svg>
<span class="t" style="transform:translate(458.00px,51.20px) rotate(0.03deg);font-size:9.25px;color:#cfcfcf;font-weight:bold;">2023/10/5 1:33</span>
<span class="t" style="transform:translate(10.00px,68.01px) rotate(0.03deg);font-size:8.92px;color:#cfcfcf;font-weight:bold;">readme</span>
<svg class="b" style="left:390.1px;top:72.40000000000005px;" width="8.4" height="7.8" viewBox="0 0 8.800 8.200"><path d="M.6 1h2.400v6H.6zM.6 4h2.400M4 1.200h4.400M6.200 0v3.600M4.300 2.400h3.800M3.800 3.700h4.800M4.700 4.800h3.300V8H4.700zM4.700 5.900h3.300M4.700 7h3.300" stroke="#d4d4d4" stroke-width="1" fill="none"/></svg>
<svg class="b" style="left:400.7px;top:72.10000000000005px;" width="8.4" height="7.8" viewBox="0 0 8.800 8.200"><path d="M4.300 0v1.200M.6 3V1.400h7.400V3M2.200 3h4.200M.8 4.700h7.000M4.300 4.700V8M2.600 6L1 7.700M6 6l1.600 1.700" stroke="#d4d4d4" stroke-width="1.050" fill="none"/></svg>
<span class="t" style="transform:translate(458.00px,68.10px) rotate(0.03deg);font-size:9.25px;color:#cfcfcf;font-weight:bold;">2023/10/5 0:18</span>
<span class="t" style="transform:translate(10.00px,84.91px) rotate(0.03deg);font-size:8.92px;color:#cfcfcf;font-weight:bold;">readme</span>
<svg class="b" style="left:390.1px;top:89.30000000000003px;" width="8.4" height="7.8" viewBox="0 0 8.800 8.200"><path d="M.6 1h2.400v6H.6zM.6 4h2.400M4 1.200h4.400M6.200 0v3.600M4.300 2.400h3.800M3.800 3.700h4.800M4.700 4.800h3.300V8H4.700zM4.700 5.900h3.300M4.700 7h3.300" stroke="#d4d4d4" stroke-width="1" fill="none"/></svg>
<svg class="b" style="left:400.7px;top:89.00000000000003px;" width="8.4" height="7.8" viewBox="0 0 8.800 8.200"><path d="M4.300 0v1.200M.6 3V1.400h7.400V3M2.200 3h4.200M.8 4.700h7.000M4.300 4.700V8M2.600 6L1 7.700M6 6l1.600 1.700" stroke="#d4d4d4" stroke-width="1.050" fill="none"/></svg>
<span class="t" style="transform:translate(458.00px,85.00px) rotate(0.03deg);font-size:9.25px;color:#cfcfcf;font-weight:bold;">2023/10/5 0:07</span>
<span class="t" style="transform:translate(10.00px,101.81px) rotate(0.03deg);font-size:8.92px;color:#cfcfcf;font-weight:bold;">readme</span>
<svg class="b" style="left:390.1px;top:106.2px;" width="8.4" height="7.8" viewBox="0 0 8.800 8.200"><path d="M.6 1h2.400v6H.6zM.6 4h2.400M4 1.200h4.400M6.200 0v3.600M4.300 2.400h3.800M3.800 3.700h4.800M4.700 4.800h3.300V8H4.700zM4.700 5.900h3.300M4.700 7h3.300" stroke="#d4d4d4" stroke-width="1" fill="none"/></svg>
<svg class="b" style="left:400.7px;top:105.9px;" width="8.4" height="7.8" viewBox="0 0 8.800 8.200"><path d="M4.300 0v1.200M.6 3V1.400h7.400V3M2.200 3h4.200M.8 4.700h7.000M4.300 4.700V8M2.600 6L1 7.700M6 6l1.600 1.700" stroke="#d4d4d4" stroke-width="1.050" fill="none"/></svg>
<span class="t" style="transform:translate(458.00px,101.90px) rotate(0.03deg);font-size:9.25px;color:#cfcfcf;font-weight:bold;">2023/10/4 23:57</span>
<div class="b" style="left:4.400px;top:8px;width:1.200px;height:112px;background:#7773b4"></div>
<div class="b" style="left:2.500px;top:6.1px;width:5px;height:5px;border-radius:50%;background:#8682c6"></div>
<div class="b" style="left:2.500px;top:23.0px;width:5px;height:5px;border-radius:50%;background:#8682c6"></div>
<div class="b" style="left:2.500px;top:39.9px;width:5px;height:5px;border-radius:50%;background:#8682c6"></div>
<div class="b" style="left:2.500px;top:56.8px;width:5px;height:5px;border-radius:50%;background:#8682c6"></div>
<div class="b" style="left:2.500px;top:73.7px;width:5px;height:5px;border-radius:50%;background:#8682c6"></div>
<div class="b" style="left:2.500px;top:90.6px;width:5px;height:5px;border-radius:50%;background:#8682c6"></div>
<div class="b" style="left:2.500px;top:107.5px;width:5px;height:5px;border-radius:50%;background:#8682c6"></div>
</div>
<div class="b" style="left:576px;top:461px;width:71px;height:12.5px;background:#4a5557;"></div>
<svg class="b" style="left:579.5px;top:462px;" width="16" height="11" viewBox="0 0 16 11"><path d="M6.500 1h3l4.500 4.500-3 3.500L6.500 4z" fill="#9b7fd0"/><path d="M4 1h3l4.500 4.500-3 3.500L4 4z" fill="#4fa35a"/><path d="M1 1h3.500L9.500 5.500 6.500 9.500 1 4.500z" fill="#e3bd3d"/><circle cx="2.800" cy="2.900" r=".8" fill="#4a5557"/></svg>
<span class="t" style="transform:translate(596.00px,459.73px) rotate(0.03deg);font-size:8.2px;color:#84898b;">origin &amp; main</span>
<div class="b" style="left:816px;top:460px;width:6.5px;height:117px;background:#3f4244;"></div>
<div class="b" style="left:816px;top:460px;width:6px;height:12.5px;background:#6a6d6f;"></div>
<div class="b" style="left:822px;top:438px;width:1.5px;height:139px;background:#333537;"></div>
<svg class="b" style="left:831px;top:443px;" width="12" height="12" viewBox="0 0 12 12"><path d="M2 9.500l3-3M5 3v3.500h3.500M9.500 2.500l-3 3" stroke="#5c5f61" stroke-width="1.100" fill="none"/></svg>
<svg class="b" style="left:849px;top:443px;" width="12" height="12" viewBox="0 0 12 12"><path d="M2 4.500h5.500a2.700 2.700 0 010 5.500H5M4.500 2L2 4.500 4.500 7" stroke="#5c5f61" stroke-width="1.100" fill="none"/></svg>
<div class="b" style="left:866px;top:442px;width:1px;height:14px;background:#4f5254;"></div>
<svg class="b" style="left:871px;top:443px;" width="13" height="13" viewBox="0 0 13 13"><rect x="1" y="1.500" width="2.600" height="2.600" fill="#c4c6c8"/><rect x="5" y="1.500" width="2.600" height="2.600" fill="#c4c6c8"/><rect x="1" y="5.500" width="2.600" height="2.600" fill="#c4c6c8"/><rect x="5" y="5.500" width="2.600" height="2.600" fill="#c4c6c8"/><path d="M8.500 10h3.500l-1.750 2z" fill="#c4c6c8"/></svg>
<svg class="b" style="left:888px;top:443px;" width="14" height="13" viewBox="0 0 14 13"><path d="M.8 1.500h9.400L6.800 5.800V10L4.200 8.500V5.800z" fill="#c4c6c8"/><path d="M9.500 10h3.500l-1.750 2z" fill="#c4c6c8"/></svg>
<div class="b" style="left:906px;top:442px;width:1px;height:14px;background:#4f5254;"></div>
<svg class="b" style="left:911px;top:443px;" width="13" height="13" viewBox="0 0 13 13"><rect x="1" y="1.500" width="9" height="2.800" fill="#c4c6c8"/><rect x="1" y="5.200" width="4" height="2.800" fill="#c4c6c8"/><rect x="6" y="5.200" width="4" height="2.800" fill="#c4c6c8"/><path d="M8.500 10h3.500l-1.750 2z" fill="#c4c6c8"/></svg>
<svg class="b" style="left:1031px;top:443px;" width="12" height="12" viewBox="0 0 12 12"><path d="M1.500 1.500h9M1.500 10.500h9" stroke="#55585a" stroke-width="1.100"/><path d="M6 3l2.300 2.300H3.700zM6 9L3.700 6.700h4.600z" fill="#55585a"/></svg>
<svg class="b" style="left:1049px;top:443px;" width="12" height="12" viewBox="0 0 12 12"><path d="M1 6h10" stroke="#55585a" stroke-width="1.100"/><path d="M6 4.800L3.700 2.300h4.600zM6 7.200l2.300 2.500H3.700z" fill="#55585a"/></svg>
<div class="b" style="left:824px;top:459px;width:242px;height:1px;background:#37393b;"></div>
<span class="t" style="transform:translate(880.00px,478.91px) rotate(0.03deg);font-size:9.3px;color:#6f7274;">Select commit to view changes</span>
<div class="b" style="left:824px;top:534px;width:242px;height:1px;background:#353739;"></div>
<span class="t" style="transform:translate(913.00px,543.21px) rotate(0.03deg);font-size:9.3px;color:#6f7274;">Commit details</span>
<div class="b" style="left:0px;top:577px;width:1080px;height:16px;background:#3c3f41;"></div>
<div class="b" style="left:0px;top:577px;width:1080px;height:1px;background:#323232;"></div>
<div class="b" style="left:15px;top:578px;width:34px;height:14px;background:#2d2f30;"></div>
<svg class="b" style="left:22.5px;top:581.2px;" width="8" height="10" viewBox="0 0 8 10"><path d="M2 .5v9M2 6.500c3.500 0 4.500-1.500 4.500-5" stroke="#d0d2d4" stroke-width="1.400" fill="none"/><circle cx="2" cy="1.500" r="1.300" fill="#d0d2d4"/><circle cx="6.500" cy="1.500" r="1.300" fill="#d0d2d4"/></svg>
<span class="t" style="transform:translate(34.20px,579.02px) rotate(0.03deg) scaleX(1.0635);font-size:7.8px;color:#dcdcdc;">Git</span>
<svg class="b" style="left:57px;top:581.5px;" width="9" height="9" viewBox="0 0 9 9"><path d="M.5 1.500h1.500M3 1.500h5.500M.5 4.500h1.500M3 4.500h5.500M.5 7.500h1.500M3 7.500h5.500" stroke="#c4c6c8" stroke-width="1.400"/></svg>
<span class="t" style="transform:translate(68.70px,579.02px) rotate(0.03deg) scaleX(0.9379);font-size:7.8px;color:#bbbbbb;">TODO</span>
<svg class="b" style="left:104.5px;top:581.3px;" width="9" height="9" viewBox="0 0 9 9"><circle cx="4.500" cy="4.500" r="4" fill="#c4c6c8"/><path d="M4.500 2v3M4.500 6v1.200" stroke="#3c3f41" stroke-width="1.200"/></svg>
<span class="t" style="transform:translate(115.70px,579.02px) rotate(0.03deg) scaleX(0.9713);font-size:7.8px;color:#bbbbbb;">Problems</span>
<svg class="b" style="left:163.5px;top:581.3px;" width="9" height="9" viewBox="0 0 9 9"><rect x=".5" y=".5" width="8" height="8" rx="1" fill="#c4c6c8"/><path d="M2 2.500l2 1.800-2 1.800" stroke="#3c3f41" stroke-width="1" fill="none"/></svg>
<span class="t" style="transform:translate(175.00px,579.02px) rotate(0.03deg) scaleX(1.0076);font-size:7.8px;color:#bbbbbb;">Terminal</span>
<svg class="b" style="left:220px;top:581.5px;" width="10" height="9" viewBox="0 0 10 9"><path d="M5 .5l4.500 1.800L5 4 .5 2.300zM.5 4.500L5 6.300l4.500-1.800M.5 6.700L5 8.500l4.500-1.800" stroke="#c4c6c8" stroke-width=".9" fill="#c4c6c8"/></svg>
<span class="t" style="transform:translate(232.50px,579.02px) rotate(0.03deg) scaleX(0.9719);font-size:7.8px;color:#bbbbbb;">Python Packages</span>
<svg class="b" style="left:308.5px;top:580.8px;" width="10.5" height="10.5" viewBox="0 0 9.500 9.500"><path d="M2.400 3.300c0-.9.600-1.300 1.800-1.300s1.800.400 1.800 1.300v1.400H3.700c-.9 0-1.300.500-1.300 1.400H1.600c-.9 0-1.300-.600-1.300-1.400s.400-1.400 1.300-1.400z" fill="#c4c6c8"/><path d="M6.700 7.400c0 .9-.600 1.300-1.800 1.300S3.100 8.300 3.100 7.400V6h2.300c.9 0 1.300-.500 1.300-1.400h.8c.9 0 1.300.600 1.300 1.400s-.400 1.400-1.300 1.400z" fill="#c4c6c8"/></svg>
<span class="t" style="transform:translate(320.70px,579.02px) rotate(0.03deg) scaleX(0.9897);font-size:7.8px;color:#bbbbbb;">Python Console</span>
<svg class="b" style="left:1011.7px;top:581px;" width="10" height="10" viewBox="0 0 10 10"><circle cx="5" cy="5" r="4.500" fill="#e8a33d"/><path d="M3.800 3.200h2.400M5 3.200v3.600" stroke="#3c3f41" stroke-width=".9"/></svg>
<span class="t" style="transform:translate(1023.70px,579.02px) rotate(0.03deg) scaleX(0.9821);font-size:7.8px;color:#bbbbbb;">Event Log</span>
<div class="b" style="left:0px;top:593px;width:1080px;height:13px;background:#3c3f41;"></div>
<div class="b" style="left:0px;top:593px;width:1080px;height:1px;background:#353739;"></div>
<svg class="b" style="left:4px;top:595.8px;" width="9" height="9" viewBox="0 0 9 9"><path d="M2.500 1h6v6h-6zM.8 3v5.500h5.700" stroke="#afb1b3" stroke-width="1" fill="none"/></svg>
<span class="t" style="transform:translate(19.80px,591.81px) rotate(0.03deg) scaleX(1.0241);font-size:8.9px;color:#bbbbbb;">Low memory: The IDE is running low on memory and this might affect performance. Please consider increasing available heap. // An... (5 minutes ag</span>
<span class="t" style="transform:translate(640.50px,591.81px) rotate(0.03deg) scaleX(1.0286);font-size:8.9px;color:#bbbbbb;">531:26</span>
<span class="t" style="transform:translate(676.70px,591.81px) rotate(0.03deg) scaleX(0.8734);font-size:8.9px;color:#bbbbbb;">CRLF</span>
<span class="t" style="transform:translate(705.50px,591.81px) rotate(0.03deg) scaleX(0.9518);font-size:8.9px;color:#777a7c;">UTF-8</span>
<span class="t" style="transform:translate(737.50px,591.81px) rotate(0.03deg) scaleX(0.9741);font-size:8.9px;color:#bbbbbb;">4 spaces</span>
<span class="t" style="transform:translate(781.00px,591.81px) rotate(0.03deg) scaleX(1.0441);font-size:8.9px;color:#bbbbbb;">Remote Python 3.7 (sftp:.../image_arg/bin/python3.7)</span>
<svg class="b" style="left:1008.5px;top:594.5px;" width="8" height="10" viewBox="0 0 8 10"><path d="M2 .5v9M2 6.500c3.500 0 4.500-1.500 4.500-5" stroke="#c4c6c8" stroke-width="1.400" fill="none"/><circle cx="2" cy="1.500" r="1.300" fill="#c4c6c8"/><circle cx="6.500" cy="1.500" r="1.300" fill="#c4c6c8"/></svg>
<span class="t" style="transform:translate(1020.00px,591.81px) rotate(0.03deg) scaleX(0.9849);font-size:8.9px;color:#bbbbbb;">main</span>
<svg class="b" style="left:1046px;top:595.5px;" width="9" height="9" viewBox="0 0 9 9"><rect x="1" y="4" width="6" height="4.500" fill="#c4c6c8"/><path d="M5.500 4V2.500a1.700 1.700 0 013.400 0" stroke="#c4c6c8" stroke-width="1" fill="none"/></svg>
<svg class="b" style="left:1061.5px;top:594.8px;" width="13" height="11" viewBox="0 0 13 11"><circle cx="5.500" cy="5.500" r="4.500" fill="#c75450"/><path d="M5.500 3v3M5.500 7v1" stroke="#fff" stroke-width="1.100"/><circle cx="10.500" cy="8.500" r="2" fill="#c75450"/></svg>
</div></body></html>
